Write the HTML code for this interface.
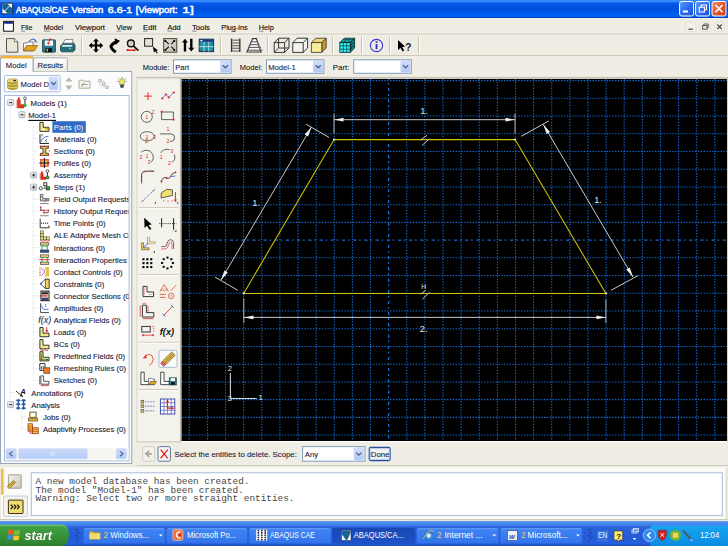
<!DOCTYPE html>
<html><head><meta charset="utf-8">
<style>
*{margin:0;padding:0;box-sizing:border-box}
html,body{width:728px;height:546px;overflow:hidden;background:#ECE9D8;font-family:"Liberation Sans",sans-serif}
.a{position:absolute;display:block}
</style></head><body>
<svg class="a" style="left:0;top:0" width="728" height="546" viewBox="0 0 728 546">
<defs>
<linearGradient id="gTitle" x1="0" y1="0" x2="0" y2="1">
 <stop offset="0" stop-color="#2F86FF"/><stop offset="0.07" stop-color="#4092FF"/><stop offset="0.16" stop-color="#0A5CEC"/>
 <stop offset="0.45" stop-color="#004FDD"/><stop offset="0.72" stop-color="#0058EA"/><stop offset="0.9" stop-color="#0066F6"/><stop offset="0.95" stop-color="#0050D8"/><stop offset="1" stop-color="#0030B0"/>
</linearGradient>
<linearGradient id="gBtnBlue" x1="0" y1="0" x2="1" y2="1">
 <stop offset="0" stop-color="#5C9BFF"/><stop offset="0.5" stop-color="#2D6DF2"/><stop offset="1" stop-color="#1A4FD6"/>
</linearGradient>
<linearGradient id="gBtnRed" x1="0" y1="0" x2="1" y2="1">
 <stop offset="0" stop-color="#F0946E"/><stop offset="0.5" stop-color="#E2582F"/><stop offset="1" stop-color="#C93E16"/>
</linearGradient>
<linearGradient id="gDrop" x1="0" y1="0" x2="0" y2="1">
 <stop offset="0" stop-color="#D4E0FC"/><stop offset="1" stop-color="#B0C8F6"/>
</linearGradient>
<linearGradient id="gTask" x1="0" y1="0" x2="0" y2="1">
 <stop offset="0" stop-color="#3A7BE8"/><stop offset="0.1" stop-color="#4A8DF0"/><stop offset="0.25" stop-color="#2A63DA"/>
 <stop offset="0.6" stop-color="#2459D8"/><stop offset="0.9" stop-color="#2460DE"/><stop offset="1" stop-color="#1A47B0"/>
</linearGradient>
<linearGradient id="gStart" x1="0" y1="0" x2="0" y2="1">
 <stop offset="0" stop-color="#5AB55A"/><stop offset="0.15" stop-color="#3F9E3F"/><stop offset="0.5" stop-color="#379437"/><stop offset="1" stop-color="#2E7E2E"/>
</linearGradient>
<linearGradient id="gTaskBtn" x1="0" y1="0" x2="0" y2="1">
 <stop offset="0" stop-color="#4E8FF5"/><stop offset="0.2" stop-color="#3C81F3"/><stop offset="1" stop-color="#3274EA"/>
</linearGradient>
<linearGradient id="gTaskAct" x1="0" y1="0" x2="0" y2="1">
 <stop offset="0" stop-color="#1A47B4"/><stop offset="1" stop-color="#1E52C8"/>
</linearGradient>
<linearGradient id="gTray" x1="0" y1="0" x2="0" y2="1">
 <stop offset="0" stop-color="#22A2F0"/><stop offset="0.2" stop-color="#12A0EE"/><stop offset="1" stop-color="#0C8BE0"/>
</linearGradient>
<linearGradient id="gScroll" x1="0" y1="0" x2="0" y2="1">
 <stop offset="0" stop-color="#CADAFB"/><stop offset="1" stop-color="#B4CCF8"/>
</linearGradient>
<linearGradient id="gTab" x1="0" y1="0" x2="0" y2="1">
 <stop offset="0" stop-color="#FDFDFC"/><stop offset="1" stop-color="#ECEAE0"/>
</linearGradient>
<linearGradient id="gExp" x1="0" y1="0" x2="1" y2="1">
 <stop offset="0" stop-color="#FFFFFF"/><stop offset="1" stop-color="#C6C2B2"/>
</linearGradient>
</defs>
<rect x="0" y="0" width="728" height="546" rx="0" fill="#EFEDE4" />
<rect x="0" y="0" width="728" height="18" rx="0" fill="url(#gTitle)" />
<rect x="0" y="18" width="728" height="16.5" rx="0" fill="#F0EEE4" />
<line x1="0" y1="34.2" x2="728" y2="34.2" stroke="#C9C5B5" stroke-width="1" />
<line x1="0" y1="35.2" x2="728" y2="35.2" stroke="#F8F7F0" stroke-width="0.8" />
<rect x="0" y="35.6" width="728" height="19.4" rx="0" fill="#EFEDE3" />
<line x1="0" y1="55.5" x2="728" y2="55.5" stroke="#CEC9B6" stroke-width="1" />
<line x1="81.5" y1="37" x2="81.5" y2="54" stroke="#C6C2AE" stroke-width="1" />
<line x1="82.5" y1="37" x2="82.5" y2="54" stroke="#FFFFFF" stroke-width="1" />
<line x1="220.5" y1="37" x2="220.5" y2="54" stroke="#C6C2AE" stroke-width="1" />
<line x1="221.5" y1="37" x2="221.5" y2="54" stroke="#FFFFFF" stroke-width="1" />
<line x1="267.5" y1="37" x2="267.5" y2="54" stroke="#C6C2AE" stroke-width="1" />
<line x1="268.5" y1="37" x2="268.5" y2="54" stroke="#FFFFFF" stroke-width="1" />
<line x1="332.5" y1="37" x2="332.5" y2="54" stroke="#C6C2AE" stroke-width="1" />
<line x1="333.5" y1="37" x2="333.5" y2="54" stroke="#FFFFFF" stroke-width="1" />
<line x1="361.5" y1="37" x2="361.5" y2="54" stroke="#C6C2AE" stroke-width="1" />
<line x1="362.5" y1="37" x2="362.5" y2="54" stroke="#FFFFFF" stroke-width="1" />
<line x1="389.5" y1="37" x2="389.5" y2="54" stroke="#C6C2AE" stroke-width="1" />
<line x1="390.5" y1="37" x2="390.5" y2="54" stroke="#FFFFFF" stroke-width="1" />
<line x1="418.5" y1="37" x2="418.5" y2="54" stroke="#C6C2AE" stroke-width="1" />
<line x1="419.5" y1="37" x2="419.5" y2="54" stroke="#FFFFFF" stroke-width="1" />
<rect x="1.9" y="3.2" width="10.6" height="10.6" rx="0" fill="#FFFFFF" stroke="#1B2F4A" stroke-width="0.9" />
<polygon points="2.4,3.7 7.6,3.7 12,8.2 12,13.3 7.4,13.3 2.4,8.4" fill="#17639B"/>
<line x1="3.6" y1="12.2" x2="10.8" y2="4.6" stroke="#E0EEF8" stroke-width="0.9" />
<text x="16.1" y="12.6" font-size="9.8" font-family="Liberation Sans" fill="#FFFFFF" textLength="51.8" lengthAdjust="spacingAndGlyphs" stroke="#FFFFFF" stroke-width="0.5">ABAQUS/CAE</text>
<text x="71.6" y="12.6" font-size="9.8" font-family="Liberation Sans" fill="#FFFFFF" textLength="31.8" lengthAdjust="spacingAndGlyphs" stroke="#FFFFFF" stroke-width="0.5">Version</text>
<text x="107.8" y="12.6" font-size="9.8" font-family="Liberation Sans" fill="#FFFFFF" textLength="24.4" lengthAdjust="spacingAndGlyphs" stroke="#FFFFFF" stroke-width="0.5">6.6-1</text>
<text x="135.8" y="12.6" font-size="9.8" font-family="Liberation Sans" fill="#FFFFFF" textLength="41.8" lengthAdjust="spacingAndGlyphs" stroke="#FFFFFF" stroke-width="0.5">[Viewport:</text>
<text x="182.3" y="12.6" font-size="9.8" font-family="Liberation Sans" fill="#FFFFFF" textLength="11.4" lengthAdjust="spacingAndGlyphs" stroke="#FFFFFF" stroke-width="0.5">1]</text>
<rect x="679.6" y="1.5" width="14" height="14.5" rx="2" fill="url(#gBtnBlue)" stroke="#FFFFFF" stroke-width="1" />
<rect x="695.6" y="1.5" width="14" height="14.5" rx="2" fill="url(#gBtnBlue)" stroke="#FFFFFF" stroke-width="1" />
<rect x="712" y="1.5" width="14" height="14.5" rx="2" fill="url(#gBtnRed)" stroke="#FFFFFF" stroke-width="1" />
<rect x="683" y="10.5" width="5" height="2" rx="0" fill="#FFFFFF" />
<rect x="699.2" y="7.2" width="5.2" height="4.8" rx="0" fill="none" stroke="#FFFFFF" stroke-width="1.1" />
<path d="M701.2,7.2 V5 H706.4 V9.8 H704.4" fill="none" stroke="#FFFFFF" stroke-width="1.1"/>
<line x1="715.5" y1="5" x2="722.5" y2="12.2" stroke="#FFFFFF" stroke-width="1.6" />
<line x1="722.5" y1="5" x2="715.5" y2="12.2" stroke="#FFFFFF" stroke-width="1.6" />
<rect x="3.6" y="21.4" width="9.8" height="9.8" rx="0" fill="#FFFFFF" stroke="#111" stroke-width="1" />
<rect x="4.2" y="22" width="8.6" height="1.8" rx="0" fill="#1C2E8C" />
<text x="21" y="29.8" font-size="7.8" font-family="Liberation Sans" fill="#101010" textLength="11.3" lengthAdjust="spacingAndGlyphs" stroke="#101010" stroke-width="0.15">File</text>
<text x="43.8" y="29.8" font-size="7.8" font-family="Liberation Sans" fill="#101010" textLength="19.3" lengthAdjust="spacingAndGlyphs" stroke="#101010" stroke-width="0.15">Model</text>
<text x="75" y="29.8" font-size="7.8" font-family="Liberation Sans" fill="#101010" textLength="30" lengthAdjust="spacingAndGlyphs" stroke="#101010" stroke-width="0.15">Viewport</text>
<text x="116.3" y="29.8" font-size="7.8" font-family="Liberation Sans" fill="#101010" textLength="15.7" lengthAdjust="spacingAndGlyphs" stroke="#101010" stroke-width="0.15">View</text>
<text x="143.1" y="29.8" font-size="7.8" font-family="Liberation Sans" fill="#101010" textLength="13.2" lengthAdjust="spacingAndGlyphs" stroke="#101010" stroke-width="0.15">Edit</text>
<text x="167.5" y="29.8" font-size="7.8" font-family="Liberation Sans" fill="#101010" textLength="13.1" lengthAdjust="spacingAndGlyphs" stroke="#101010" stroke-width="0.15">Add</text>
<text x="191.9" y="29.8" font-size="7.8" font-family="Liberation Sans" fill="#101010" textLength="18.1" lengthAdjust="spacingAndGlyphs" stroke="#101010" stroke-width="0.15">Tools</text>
<text x="221.3" y="29.8" font-size="7.8" font-family="Liberation Sans" fill="#101010" textLength="26.3" lengthAdjust="spacingAndGlyphs" stroke="#101010" stroke-width="0.15">Plug-ins</text>
<text x="258.8" y="29.8" font-size="7.8" font-family="Liberation Sans" fill="#101010" textLength="15" lengthAdjust="spacingAndGlyphs" stroke="#101010" stroke-width="0.15">Help</text>
<line x1="21" y1="31.2" x2="25" y2="31.2" stroke="#6A6A78" stroke-width="0.7" />
<line x1="44" y1="31.2" x2="50.4" y2="31.2" stroke="#6A6A78" stroke-width="0.7" />
<line x1="85.4" y1="31.2" x2="89.6" y2="31.2" stroke="#6A6A78" stroke-width="0.7" />
<line x1="116.4" y1="31.2" x2="121" y2="31.2" stroke="#6A6A78" stroke-width="0.7" />
<line x1="143.2" y1="31.2" x2="147.6" y2="31.2" stroke="#6A6A78" stroke-width="0.7" />
<line x1="167.6" y1="31.2" x2="172.4" y2="31.2" stroke="#6A6A78" stroke-width="0.7" />
<line x1="192" y1="31.2" x2="196.6" y2="31.2" stroke="#6A6A78" stroke-width="0.7" />
<line x1="231" y1="31.2" x2="235.4" y2="31.2" stroke="#6A6A78" stroke-width="0.7" />
<line x1="259" y1="31.2" x2="263.6" y2="31.2" stroke="#6A6A78" stroke-width="0.7" />
<rect x="685.6" y="22" width="10.2" height="9.6" rx="1.5" fill="#F2F0E8" stroke="#E0DDD0" stroke-width="0.8" />
<rect x="700" y="22" width="10.2" height="9.6" rx="1.5" fill="#F2F0E8" stroke="#E0DDD0" stroke-width="0.8" />
<rect x="714.2" y="22" width="10.2" height="9.6" rx="1.5" fill="#F2F0E8" stroke="#E0DDD0" stroke-width="0.8" />
<rect x="688.5" y="28.6" width="4.4" height="1.2" rx="0" fill="#444" />
<rect x="702.6" y="25.6" width="4.4" height="3.6" rx="0" fill="none" stroke="#555" stroke-width="1" />
<path d="M703.8,25.6 V24 H708.2 V27.6 H707" fill="none" stroke="#555" stroke-width="1"/>
<line x1="717.3" y1="24.5" x2="721.7" y2="29" stroke="#555" stroke-width="1.3" />
<line x1="721.7" y1="24.5" x2="717.3" y2="29" stroke="#555" stroke-width="1.3" />
<path d="M6.5,38.6 H14.6 L17.8,41.8 V52.2 H6.5 Z" fill="#EAE7D8" stroke="#55554F" stroke-width="1"/>
<path d="M14.6,38.6 V41.8 H17.8" fill="#FFFFFF" stroke="#55554F" stroke-width="0.8"/>
<path d="M23.5,43 H27 L28,42 H33 V50.8 H23.5 Z" fill="#FFFFFF" stroke="#666" stroke-width="0.8"/>
<path d="M23.5,50.8 L26.4,45.6 H37.6 L34.4,50.8 Z" fill="#E6A41E" stroke="#7A5A10" stroke-width="0.7"/>
<path d="M29,41.5 Q32.5,37.2 36,40.8" fill="none" stroke="#3A70D0" stroke-width="1.1"/>
<polygon points="35,39.6 37.4,42.2 34.4,42.2" fill="#3A70D0"/>
<rect x="42.5" y="39.8" width="13" height="12.4" rx="0.8" fill="#2A7A8C" stroke="#1C4F5C" stroke-width="0.8" />
<rect x="44.8" y="40.5" width="8.2" height="5.2" rx="0" fill="#FFFFFF" />
<rect x="45.5" y="48.2" width="6.5" height="4" rx="0" fill="#111" />
<rect x="46.6" y="48.8" width="1.4" height="2.6" rx="0" fill="#E0B020" />
<path d="M51,38.4 L48.6,41.6" stroke="#E02020" stroke-width="1.1" fill="none"/>
<polygon points="46.6,42.6 50.4,42.6 48.5,44.8" fill="#E02020"/>
<path d="M60.5,46 L63.4,43 H73.6 L75,45 V50 L72.8,51.8 H61.5 L60.5,50.5 Z" fill="#22707F" stroke="#173F48" stroke-width="0.8"/>
<path d="M63,43.2 L65,39.6 H73 L72.6,43.2 Z" fill="#FFFFFF" stroke="#5A5A5A" stroke-width="0.7"/>
<path d="M62.5,45 H72.6 L71.6,46.8 H61.8 Z" fill="#E8E8E8"/>
<rect x="69" y="48.2" width="2.2" height="0.9" rx="0" fill="#E0C040" />
<path d="M96,38.4 L99,41.6 H97.1 V44.4 H99.9 V42.5 L103.2,45.5 L99.9,48.5 V46.6 H97.1 V49.4 H99 L96,52.7 L93,49.4 H94.9 V46.6 H92.1 V48.5 L88.8,45.5 L92.1,42.5 V44.4 H94.9 V41.6 H93 Z" fill="#000"/>
<path d="M116.4,41.8 Q112,43.6 110.9,46.4 Q111.4,49 115.8,52.2" fill="none" stroke="#000" stroke-width="2.9" stroke-linejoin="round"/>
<polygon points="114.6,38.2 120,40.8 115.6,45" fill="#000"/>
<circle cx="130.9" cy="43.4" r="3.4" fill="#D4D2C8" stroke="#111" stroke-width="1.4"/>
<line x1="133.4" y1="45.9" x2="138.4" y2="50.6" stroke="#111" stroke-width="1.7" />
<line x1="127.8" y1="50.2" x2="134.4" y2="50.2" stroke="#E01818" stroke-width="1.3" />
<circle cx="127.6" cy="50.2" r="1.1" fill="#E01818"/><circle cx="134.6" cy="50.2" r="1.1" fill="#E01818"/>
<rect x="144.6" y="38.6" width="8" height="7.6" rx="0" fill="#E4E2D8" stroke="#222" stroke-width="1" />
<polygon points="152.8,46.4 158.2,50.4 156.2,50.8 157.8,53 156.8,53.4 155.4,51.2 154,52.6" fill="#000"/>
<linearGradient id="gFit" x1="0" y1="0" x2="1" y2="1"><stop offset="0" stop-color="#E4E1D6"/><stop offset="1" stop-color="#C4C0B0"/></linearGradient>
<rect x="163.7" y="38.6" width="13" height="13.6" rx="0" fill="url(#gFit)" stroke="#555248" stroke-width="1.1" />
<line x1="165.3" y1="40.9" x2="168.828" y2="44.176" stroke="#111" stroke-width="1.1" />
<circle cx="165.3" cy="40.9" r="1.05" fill="#000"/>
<line x1="174.3" y1="40.9" x2="171.34799999999998" y2="44.176" stroke="#111" stroke-width="1.1" />
<circle cx="174.3" cy="40.9" r="1.05" fill="#000"/>
<line x1="165.3" y1="50" x2="168.828" y2="46.724000000000004" stroke="#111" stroke-width="1.1" />
<circle cx="165.3" cy="50" r="1.05" fill="#000"/>
<line x1="174.3" y1="50" x2="171.34799999999998" y2="46.724000000000004" stroke="#111" stroke-width="1.1" />
<circle cx="174.3" cy="50" r="1.05" fill="#000"/>
<path d="M185,38.8 L188,42.6 H186.2 V51.6 H183.8 V42.6 H182 Z" fill="#000"/>
<path d="M191.3,51.6 L194.3,47.8 H192.5 V38.8 H190.1 V47.8 H188.3 Z" fill="#000"/>
<rect x="199.2" y="39.2" width="14.4" height="12.4" rx="0" fill="#1F8F9F" stroke="#1A2A50" stroke-width="1" />
<rect x="199.7" y="39.7" width="13.4" height="2" rx="0" fill="#24338E" />
<rect x="200.4" y="40" width="2" height="1.2" rx="0" fill="#FFFFFF" />
<line x1="204.0" y1="41.8" x2="204.0" y2="51.6" stroke="#D0E8F0" stroke-width="0.8" />
<line x1="208.79999999999998" y1="41.8" x2="208.79999999999998" y2="51.6" stroke="#D0E8F0" stroke-width="0.8" />
<line x1="199.2" y1="46.7" x2="213.6" y2="46.7" stroke="#D0E8F0" stroke-width="0.8" />
<line x1="231.6" y1="38.6" x2="231.6" y2="52" stroke="#333" stroke-width="1.4" />
<line x1="239.8" y1="38.6" x2="239.8" y2="52" stroke="#333" stroke-width="1.4" />
<line x1="232.2" y1="40.2" x2="239.2" y2="40.2" stroke="#777" stroke-width="1.3" />
<line x1="232.2" y1="42.900000000000006" x2="239.2" y2="42.900000000000006" stroke="#777" stroke-width="1.3" />
<line x1="232.2" y1="45.6" x2="239.2" y2="45.6" stroke="#777" stroke-width="1.3" />
<line x1="232.2" y1="48.300000000000004" x2="239.2" y2="48.300000000000004" stroke="#777" stroke-width="1.3" />
<line x1="232.2" y1="51.0" x2="239.2" y2="51.0" stroke="#777" stroke-width="1.3" />
<path d="M252.6,38.6 H256.4 L261,52 H247 Z" fill="#FFFFFF" stroke="#333" stroke-width="1.1"/>
<line x1="250.92835820895522" y1="41.8" x2="258.0716417910448" y2="41.8" stroke="#666" stroke-width="1.2" />
<line x1="249.46567164179103" y1="44.6" x2="259.53432835820894" y2="44.6" stroke="#666" stroke-width="1.2" />
<line x1="248.00298507462688" y1="47.4" x2="260.99701492537315" y2="47.4" stroke="#666" stroke-width="1.2" />
<line x1="246.5402985074627" y1="50.2" x2="262.4597014925373" y2="50.2" stroke="#666" stroke-width="1.2" />
<path d="M274.2,42.6 H284.6 V52.4 H274.2 Z M278.6,38.2 H289 V48 H278.6 Z M274.2,42.6 L278.6,38.2 M284.6,42.6 L289,38.2 M284.6,52.4 L289,48 M274.2,52.4 L278.6,48" fill="none" stroke="#222" stroke-width="0.9"/>
<path d="M292.8,42.6 L297.2,38.2 H307.6 V48 L303.2,52.4 H292.8 Z" fill="#F4F3EE" stroke="#222" stroke-width="0.9"/>
<path d="M292.8,42.6 H303.2 V52.4 M303.2,42.6 L307.6,38.2" fill="none" stroke="#222" stroke-width="0.9"/>
<path d="M311.4,42.6 L315.8,38.2 H326.2 L321.8,42.6 Z" fill="#F0D070" stroke="#333" stroke-width="0.8"/>
<path d="M321.8,42.6 L326.2,38.2 V48 L321.8,52.4 Z" fill="#C8962A" stroke="#333" stroke-width="0.8"/>
<path d="M311.4,42.6 H321.8 V52.4 H311.4 Z" fill="#F5EE98" stroke="#333" stroke-width="0.8"/>
<path d="M339.8,42.6 L344.2,38.2 H354.6 L350.2,42.6 Z" fill="#22E6EE" stroke="#000" stroke-width="0.7"/>
<path d="M350.2,42.6 L354.6,38.2 V48 L350.2,52.4 Z" fill="#12C4D0" stroke="#000" stroke-width="0.7"/>
<path d="M339.8,42.6 H350.2 V52.4 H339.8 Z" fill="#2AF4F8" stroke="#000" stroke-width="0.7"/>
<path d="M343.3,42.6 V52.4 M346.7,42.6 V52.4 M339.8,45.9 H350.2 M339.8,49.2 H350.2 M341.3,41.1 H351.7 M342.8,39.6 H353.2 M351.7,41.1 V50.9 M353.2,39.6 V49.5 M346.7,42.6 L351.1,38.2 M343.3,42.6 L347.7,38.2 M350.2,45.9 L354.6,41.5 M350.2,49.2 L354.6,44.8" fill="none" stroke="#000" stroke-width="0.55"/>
<circle cx="376.5" cy="45.5" r="6.1" fill="none" stroke="#3434D4" stroke-width="1.1"/>
<rect x="375.6" y="44" width="1.9" height="5.2" rx="0" fill="#3434D4" />
<rect x="375.6" y="41.2" width="1.9" height="1.7" rx="0" fill="#3434D4" />
<polygon points="398,40 398,50.2 400.4,47.8 402.6,51.4 404.2,50.6 402.2,47 405.2,46.8" fill="#000"/>
<text x="405.2" y="50.6" font-size="10" font-family="Liberation Sans" fill="#111" font-weight="bold">?</text>
<rect x="0.5" y="71.5" width="131.2" height="392" rx="0" fill="#FCFCFE" stroke="#98A6B4" stroke-width="1" />
<path d="M33,71.5 V58.5 Q33,57.8 34,57.8 H66.6 Q67.4,57.8 67.4,58.6 V71.5" fill="url(#gTab)" stroke="#A0ADBB" stroke-width="1"/>
<path d="M0.5,71.6 V57.6 Q0.5,56.2 2,56.2 H31.6 Q33,56.2 33,57.6 V71.6" fill="#FCFCFE" stroke="#98A6B4" stroke-width="1"/>
<path d="M0.8,58.4 V57.4 Q0.8,56 2.2,56 H31.4 Q32.8,56 32.8,57.4 V58.4 Z" fill="#F4B23A"/>
<rect x="1.2" y="71" width="31.4" height="1.4" rx="0" fill="#FCFCFE" />
<text x="5.8" y="67.6" font-size="7.7" font-family="Liberation Sans" fill="#1A1A40"  stroke="#1A1A40" stroke-width="0.1">Model</text>
<text x="37.4" y="67.8" font-size="7.7" font-family="Liberation Sans" fill="#1A1A40"  stroke="#1A1A40" stroke-width="0.1">Results</text>
<text x="142.8" y="70" font-size="7.8" font-family="Liberation Sans" fill="#000000" textLength="26.5" lengthAdjust="spacingAndGlyphs" >Module:</text>
<text x="239.8" y="70" font-size="7.8" font-family="Liberation Sans" fill="#000000" textLength="22.7" lengthAdjust="spacingAndGlyphs" >Model:</text>
<text x="332.8" y="70" font-size="7.8" font-family="Liberation Sans" fill="#000000" textLength="16.7" lengthAdjust="spacingAndGlyphs" >Part:</text>
<rect x="173.5" y="59.8" width="57.599999999999994" height="13.5" rx="0" fill="#FFFFFF" stroke="#7F9DB9" stroke-width="1" />
<rect x="220.7" y="60.9" width="9.4" height="11.3" rx="1" fill="url(#gDrop)" stroke="#BACBF4" stroke-width="0.6" />
<path d="M222.8,65.2 L225.4,67.8 L228.0,65.2" fill="none" stroke="#4D6185" stroke-width="1.3"/>
<text x="175.2" y="69.6" font-size="7.6" font-family="Liberation Sans" fill="#1A1A40"  stroke="#1A1A40" stroke-width="0.1">Part</text>
<rect x="266.5" y="59.8" width="57.39999999999998" height="13.5" rx="0" fill="#FFFFFF" stroke="#7F9DB9" stroke-width="1" />
<rect x="313.5" y="60.9" width="9.4" height="11.3" rx="1" fill="url(#gDrop)" stroke="#BACBF4" stroke-width="0.6" />
<path d="M315.6,65.2 L318.2,67.8 L320.8,65.2" fill="none" stroke="#4D6185" stroke-width="1.3"/>
<text x="268.2" y="69.6" font-size="7.6" font-family="Liberation Sans" fill="#1A1A40"  stroke="#1A1A40" stroke-width="0.1">Model-1</text>
<rect x="353.7" y="59.8" width="57.60000000000002" height="13.5" rx="0" fill="#FFFFFF" stroke="#7F9DB9" stroke-width="1" />
<rect x="400.90000000000003" y="60.9" width="9.4" height="11.3" rx="1" fill="url(#gDrop)" stroke="#BACBF4" stroke-width="0.6" />
<path d="M403.0,65.2 L405.6,67.8 L408.2,65.2" fill="none" stroke="#4D6185" stroke-width="1.3"/>
<rect x="4.4" y="75.6" width="55.8" height="16.2" rx="1" fill="#FFFFFF" stroke="#A9BCD6" stroke-width="1" />
<ellipse cx="12.6" cy="87.80000000000001" rx="5.4" ry="2.2" fill="#B89A30"/>
<ellipse cx="12.6" cy="86.4" rx="5.4" ry="2.1" fill="#E9D875" stroke="#8A7420" stroke-width="0.5"/>
<ellipse cx="12.6" cy="85.0" rx="5.4" ry="2.2" fill="#B89A30"/>
<ellipse cx="12.6" cy="83.6" rx="5.4" ry="2.1" fill="#E9D875" stroke="#8A7420" stroke-width="0.5"/>
<ellipse cx="12.6" cy="82.2" rx="5.4" ry="2.2" fill="#B89A30"/>
<ellipse cx="12.6" cy="80.8" rx="5.4" ry="2.1" fill="#E9D875" stroke="#8A7420" stroke-width="0.5"/>
<ellipse cx="14.6" cy="80.6" rx="1.6" ry="0.8" fill="#333"/>
<text x="20.5" y="87.2" font-size="7.7" font-family="Liberation Sans" fill="#1A1A40"  stroke="#1A1A40" stroke-width="0.1">Model D</text>
<rect x="49.2" y="77.2" width="8.8" height="12.6" rx="1" fill="url(#gDrop)" stroke="#BACBF4" stroke-width="0.6" />
<path d="M51.2,82 L53.6,84.6 L56,82" fill="none" stroke="#4D6185" stroke-width="1.3"/>
<polygon points="68.8,77.4 72.4,81.4 65.2,81.4" fill="#B8B4A2"/><polygon points="68.8,89.9 72.4,85.6 65.2,85.6" fill="#B8B4A2"/>
<path d="M79,80.2 H83 L84,81.2 H90 V88.2 H79 Z" fill="#F4F3EE" stroke="#A8A596" stroke-width="0.9"/>
<path d="M82,84.4 H87.4 M82,84.4 L83.6,83 M82,84.4 V86.8" fill="none" stroke="#888474" stroke-width="0.8"/>
<path d="M98.6,79.4 h2.4 v2.4 h-2.4 Z M102.4,82.6 h2.6 v2.6 h-2.6 Z M105.8,86 h2.4 v2.4 h-2.4 Z" fill="#F8F8F4" stroke="#A8A596" stroke-width="0.8"/>
<path d="M99.8,81.8 V85.6 H102.4 M101,80.6 H103.7 V82.6 M103.7,85.2 V87.2 H105.8" fill="none" stroke="#B8B5A6" stroke-width="0.7" stroke-dasharray="0.8 0.6"/>
<path d="M119.6,84.6 V81.4 Q119.6,78.6 122,78.6 Q124.4,78.6 124.4,81.4 V84.6 Z" fill="#F2E468" stroke="#8A8A50" stroke-width="0.6"/>
<rect x="120.2" y="84.6" width="3.6" height="3.2" rx="0.8" fill="#3E4A44" />
<line x1="117.2" y1="81.4" x2="118.8" y2="81.4" stroke="#5A8A5A" stroke-width="0.8" />
<line x1="125.2" y1="81.4" x2="126.8" y2="81.4" stroke="#5A8A5A" stroke-width="0.8" />
<line x1="117.8" y1="78.2" x2="119" y2="79.4" stroke="#5A8A5A" stroke-width="0.8" />
<line x1="126.2" y1="78.2" x2="125" y2="79.4" stroke="#5A8A5A" stroke-width="0.8" />
<line x1="122" y1="76.6" x2="122" y2="77.8" stroke="#5A8A5A" stroke-width="0.8" />
<rect x="4.5" y="95.5" width="124.6" height="365.4" rx="0" fill="#FFFFFF" stroke="#A7BCDB" stroke-width="1" />
<line x1="10.4" y1="107" x2="10.4" y2="401.6" stroke="#D6D6D6" stroke-width="0.8" stroke-dasharray="1 1"/>
<line x1="33.2" y1="121" x2="33.2" y2="380.43999999999994" stroke="#D6D6D6" stroke-width="0.8" stroke-dasharray="1 1"/>
<line x1="21.6" y1="408.6" x2="21.6" y2="428.76" stroke="#D6D6D6" stroke-width="0.8" stroke-dasharray="1 1"/>
<line x1="21.6" y1="108" x2="21.6" y2="111" stroke="#D6D6D6" stroke-width="0.8" stroke-dasharray="1 1"/>
<line x1="33.2" y1="126.75999999999999" x2="38.6" y2="126.75999999999999" stroke="#D6D6D6" stroke-width="0.8" stroke-dasharray="1 1"/>
<line x1="33.2" y1="138.84" x2="38.6" y2="138.84" stroke="#D6D6D6" stroke-width="0.8" stroke-dasharray="1 1"/>
<line x1="33.2" y1="150.92" x2="38.6" y2="150.92" stroke="#D6D6D6" stroke-width="0.8" stroke-dasharray="1 1"/>
<line x1="33.2" y1="163.0" x2="38.6" y2="163.0" stroke="#D6D6D6" stroke-width="0.8" stroke-dasharray="1 1"/>
<line x1="33.2" y1="199.24" x2="38.6" y2="199.24" stroke="#D6D6D6" stroke-width="0.8" stroke-dasharray="1 1"/>
<line x1="33.2" y1="211.32" x2="38.6" y2="211.32" stroke="#D6D6D6" stroke-width="0.8" stroke-dasharray="1 1"/>
<line x1="33.2" y1="223.39999999999998" x2="38.6" y2="223.39999999999998" stroke="#D6D6D6" stroke-width="0.8" stroke-dasharray="1 1"/>
<line x1="33.2" y1="235.48" x2="38.6" y2="235.48" stroke="#D6D6D6" stroke-width="0.8" stroke-dasharray="1 1"/>
<line x1="33.2" y1="247.56" x2="38.6" y2="247.56" stroke="#D6D6D6" stroke-width="0.8" stroke-dasharray="1 1"/>
<line x1="33.2" y1="259.64" x2="38.6" y2="259.64" stroke="#D6D6D6" stroke-width="0.8" stroke-dasharray="1 1"/>
<line x1="33.2" y1="271.72" x2="38.6" y2="271.72" stroke="#D6D6D6" stroke-width="0.8" stroke-dasharray="1 1"/>
<line x1="33.2" y1="283.79999999999995" x2="38.6" y2="283.79999999999995" stroke="#D6D6D6" stroke-width="0.8" stroke-dasharray="1 1"/>
<line x1="33.2" y1="295.88" x2="38.6" y2="295.88" stroke="#D6D6D6" stroke-width="0.8" stroke-dasharray="1 1"/>
<line x1="33.2" y1="307.96000000000004" x2="38.6" y2="307.96000000000004" stroke="#D6D6D6" stroke-width="0.8" stroke-dasharray="1 1"/>
<line x1="33.2" y1="320.03999999999996" x2="38.6" y2="320.03999999999996" stroke="#D6D6D6" stroke-width="0.8" stroke-dasharray="1 1"/>
<line x1="33.2" y1="332.12" x2="38.6" y2="332.12" stroke="#D6D6D6" stroke-width="0.8" stroke-dasharray="1 1"/>
<line x1="33.2" y1="344.2" x2="38.6" y2="344.2" stroke="#D6D6D6" stroke-width="0.8" stroke-dasharray="1 1"/>
<line x1="33.2" y1="356.28" x2="38.6" y2="356.28" stroke="#D6D6D6" stroke-width="0.8" stroke-dasharray="1 1"/>
<line x1="33.2" y1="368.36" x2="38.6" y2="368.36" stroke="#D6D6D6" stroke-width="0.8" stroke-dasharray="1 1"/>
<line x1="33.2" y1="380.43999999999994" x2="38.6" y2="380.43999999999994" stroke="#D6D6D6" stroke-width="0.8" stroke-dasharray="1 1"/>
<line x1="10.4" y1="392.52" x2="15" y2="392.52" stroke="#D6D6D6" stroke-width="0.8" stroke-dasharray="1 1"/>
<line x1="21.6" y1="416.67999999999995" x2="27" y2="416.67999999999995" stroke="#D6D6D6" stroke-width="0.8" stroke-dasharray="1 1"/>
<line x1="21.6" y1="428.76" x2="27" y2="428.76" stroke="#D6D6D6" stroke-width="0.8" stroke-dasharray="1 1"/>
<rect x="7.6" y="99.6" width="6" height="6" rx="0.8" fill="url(#gExp)" stroke="#9AB0CC" stroke-width="0.8" />
<line x1="9.1" y1="102.6" x2="12.1" y2="102.6" stroke="#222" stroke-width="0.9" />
<path d="M17.2,108.0 V100.39999999999999 L18.8,97.0 L20.4,100.39999999999999 V104.39999999999999 H24 V108.0 Z" fill="#E23A22" stroke="#A02010" stroke-width="0.4"/>
<line x1="16.2" y1="100.19999999999999" x2="16.2" y2="107.8" stroke="#E87070" stroke-width="0.9" stroke-dasharray="0.7 0.7"/>
<circle cx="25" cy="98.19999999999999" r="1.4" fill="#fff" stroke="#333" stroke-width="0.7"/>
<line x1="25" y1="99.6" x2="25" y2="105.19999999999999" stroke="#111" stroke-width="0.9" />
<circle cx="25.1" cy="105.6" r="1.5" fill="#20B030"/>
<text x="30.6" y="105.6" font-size="7.7" font-family="Liberation Sans" fill="#161636"  stroke="#161636" stroke-width="0.1">Models (1)</text>
<rect x="18.9" y="111.67999999999999" width="6" height="6" rx="0.8" fill="url(#gExp)" stroke="#9AB0CC" stroke-width="0.8" />
<line x1="20.4" y1="114.67999999999999" x2="23.4" y2="114.67999999999999" stroke="#222" stroke-width="0.9" />
<text x="28.2" y="117.67999999999999" font-size="7.7" font-family="Liberation Sans" fill="#161636"  stroke="#161636" stroke-width="0.1">Model-1</text>
<line x1="28.2" y1="120.4" x2="56" y2="120.4" stroke="#000" stroke-width="1.1" />
<rect x="52.4" y="121.2" width="33.4" height="11.6" rx="0" fill="#316AC5" />
<clipPath id="treeclip"><rect x="5" y="96" width="123.6" height="350"/></clipPath>
<g clip-path="url(#treeclip)">
<text x="53.8" y="129.76" font-size="7.7" font-family="Liberation Sans" fill="#FFFFFF" >Parts (0)</text>
<text x="53.8" y="141.84" font-size="7.7" font-family="Liberation Sans" fill="#161636"  stroke="#161636" stroke-width="0.1">Materials (0)</text>
<text x="53.8" y="153.92" font-size="7.7" font-family="Liberation Sans" fill="#161636"  stroke="#161636" stroke-width="0.1">Sections (0)</text>
<text x="53.8" y="166.0" font-size="7.7" font-family="Liberation Sans" fill="#161636"  stroke="#161636" stroke-width="0.1">Profiles (0)</text>
<text x="53.8" y="178.07999999999998" font-size="7.7" font-family="Liberation Sans" fill="#161636"  stroke="#161636" stroke-width="0.1">Assembly</text>
<text x="53.8" y="190.16" font-size="7.7" font-family="Liberation Sans" fill="#161636"  stroke="#161636" stroke-width="0.1">Steps (1)</text>
<text x="53.8" y="202.24" font-size="7.7" font-family="Liberation Sans" fill="#161636"  stroke="#161636" stroke-width="0.1">Field Output Requests</text>
<text x="53.8" y="214.32" font-size="7.7" font-family="Liberation Sans" fill="#161636"  stroke="#161636" stroke-width="0.1">History Output Requests</text>
<text x="53.8" y="226.39999999999998" font-size="7.7" font-family="Liberation Sans" fill="#161636"  stroke="#161636" stroke-width="0.1">Time Points (0)</text>
<text x="53.8" y="238.48" font-size="7.7" font-family="Liberation Sans" fill="#161636"  stroke="#161636" stroke-width="0.1">ALE Adaptive Mesh Constraints</text>
<text x="53.8" y="250.56" font-size="7.7" font-family="Liberation Sans" fill="#161636"  stroke="#161636" stroke-width="0.1">Interactions (0)</text>
<text x="53.8" y="262.64" font-size="7.7" font-family="Liberation Sans" fill="#161636"  stroke="#161636" stroke-width="0.1">Interaction Properties</text>
<text x="53.8" y="274.72" font-size="7.7" font-family="Liberation Sans" fill="#161636"  stroke="#161636" stroke-width="0.1">Contact Controls (0)</text>
<text x="53.8" y="286.79999999999995" font-size="7.7" font-family="Liberation Sans" fill="#161636"  stroke="#161636" stroke-width="0.1">Constraints (0)</text>
<text x="53.8" y="298.88" font-size="7.7" font-family="Liberation Sans" fill="#161636"  stroke="#161636" stroke-width="0.1">Connector Sections (0)</text>
<text x="53.8" y="310.96000000000004" font-size="7.7" font-family="Liberation Sans" fill="#161636"  stroke="#161636" stroke-width="0.1">Amplitudes (0)</text>
<text x="53.8" y="323.03999999999996" font-size="7.7" font-family="Liberation Sans" fill="#161636"  stroke="#161636" stroke-width="0.1">Analytical Fields (0)</text>
<text x="53.8" y="335.12" font-size="7.7" font-family="Liberation Sans" fill="#161636"  stroke="#161636" stroke-width="0.1">Loads (0)</text>
<text x="53.8" y="347.2" font-size="7.7" font-family="Liberation Sans" fill="#161636"  stroke="#161636" stroke-width="0.1">BCs (0)</text>
<text x="53.8" y="359.28" font-size="7.7" font-family="Liberation Sans" fill="#161636"  stroke="#161636" stroke-width="0.1">Predefined Fields (0)</text>
<text x="53.8" y="371.36" font-size="7.7" font-family="Liberation Sans" fill="#161636"  stroke="#161636" stroke-width="0.1">Remeshing Rules (0)</text>
<text x="53.8" y="383.43999999999994" font-size="7.7" font-family="Liberation Sans" fill="#161636"  stroke="#161636" stroke-width="0.1">Sketches (0)</text>
<text x="31.3" y="395.52" font-size="7.7" font-family="Liberation Sans" fill="#161636"  stroke="#161636" stroke-width="0.1">Annotations (0)</text>
<text x="31.3" y="407.6" font-size="7.7" font-family="Liberation Sans" fill="#161636"  stroke="#161636" stroke-width="0.1">Analysis</text>
<text x="42.9" y="419.67999999999995" font-size="7.7" font-family="Liberation Sans" fill="#161636"  stroke="#161636" stroke-width="0.1">Jobs (0)</text>
<text x="42.9" y="431.76" font-size="7.7" font-family="Liberation Sans" fill="#161636"  stroke="#161636" stroke-width="0.1">Adaptivity Processes (0)</text>
</g>
<rect x="30.6" y="172.07999999999998" width="6" height="6" rx="0.8" fill="url(#gExp)" stroke="#9AB0CC" stroke-width="0.8" />
<line x1="32.1" y1="175.07999999999998" x2="35.1" y2="175.07999999999998" stroke="#222" stroke-width="0.9" />
<line x1="33.6" y1="173.57999999999998" x2="33.6" y2="176.57999999999998" stroke="#222" stroke-width="0.9" />
<rect x="30.6" y="184.16" width="6" height="6" rx="0.8" fill="url(#gExp)" stroke="#9AB0CC" stroke-width="0.8" />
<line x1="32.1" y1="187.16" x2="35.1" y2="187.16" stroke="#222" stroke-width="0.9" />
<line x1="33.6" y1="185.66" x2="33.6" y2="188.66" stroke="#222" stroke-width="0.9" />
<rect x="7.6" y="401.6" width="6" height="6" rx="0.8" fill="url(#gExp)" stroke="#9AB0CC" stroke-width="0.8" />
<line x1="9.1" y1="404.6" x2="12.1" y2="404.6" stroke="#222" stroke-width="0.9" />
<path d="M39.9,122.35999999999999 H43.199999999999996 V127.35999999999999 H48.8 V131.35999999999999 H39.9 Z" fill="#F4EC98" stroke="#3A3420" stroke-width="1"/>
<path d="M43.199999999999996,127.35999999999999 H48.8 L49.2,129.35999999999999 L48.8,131.35999999999999" fill="#D8A838" stroke="#3A3420" stroke-width="0.6"/>
<path d="M40.0,134.24 V143.44 H49.0" fill="none" stroke="#222" stroke-width="1"/>
<path d="M40.4,142.64000000000001 Q42.4,136.44 48.599999999999994,136.24" fill="none" stroke="#4060D0" stroke-width="0.9"/>
<path d="M47.0,139.24 L45.4,140.64000000000001 L47.0,141.84" fill="none" stroke="#222" stroke-width="0.7"/>
<path d="M41.4,134.44 H42.8 M41.4,135.84 H42.8" stroke="#222" stroke-width="0.6"/>
<path d="M40.4,146.32 H48.4 V148.32 H45.8 V153.32 H48.4 V155.32 H40.4 V153.32 H43.0 V148.32 H40.4 Z" fill="#F0C848" stroke="#222" stroke-width="0.8"/>
<circle cx="40.4" cy="146.32" r="0.7" fill="#E02020"/>
<circle cx="48.4" cy="146.32" r="0.7" fill="#E02020"/>
<circle cx="40.4" cy="155.32" r="0.7" fill="#E02020"/>
<circle cx="48.4" cy="155.32" r="0.7" fill="#E02020"/>
<circle cx="44.4" cy="146.11999999999998" r="0.7" fill="#E02020"/>
<circle cx="49.4" cy="150.92" r="0.7" fill="#E02020"/>
<rect x="40.6" y="159.4" width="7.8" height="7.2" rx="0" fill="#F08040" stroke="#E04040" stroke-width="0.7" />
<rect x="42.0" y="160.8" width="5" height="4.4" rx="0" fill="#F4C060" />
<line x1="44.4" y1="158.0" x2="44.4" y2="168.0" stroke="#111" stroke-width="1" />
<line x1="39.4" y1="163.0" x2="49.599999999999994" y2="163.0" stroke="#111" stroke-width="1" />
<path d="M40.4,179.67999999999998 V174.07999999999998 L42.0,170.27999999999997 L43.4,174.07999999999998 V176.67999999999998 H46.0 V179.67999999999998 Z" fill="#E02818"/>
<line x1="39.699999999999996" y1="173.07999999999998" x2="39.699999999999996" y2="179.67999999999998" stroke="#E06060" stroke-width="0.6" stroke-dasharray="0.8 0.8"/>
<circle cx="47.4" cy="171.07999999999998" r="1.4" fill="#fff" stroke="#222" stroke-width="0.7"/>
<line x1="47.4" y1="172.48" x2="47.4" y2="176.67999999999998" stroke="#111" stroke-width="0.9" />
<circle cx="47.599999999999994" cy="177.48" r="1.6" fill="#20B030" stroke="#111" stroke-width="0.4"/>
<circle cx="40.8" cy="188.35999999999999" r="1.6" fill="#fff" stroke="#111" stroke-width="0.7"/>
<line x1="42.4" y1="188.35999999999999" x2="46.4" y2="188.35999999999999" stroke="#666" stroke-width="0.8" />
<rect x="43.8" y="182.76" width="3" height="3" rx="0" fill="#fff" stroke="#111" stroke-width="0.8" />
<line x1="44.8" y1="185.76" x2="44.8" y2="188.35999999999999" stroke="#666" stroke-width="0.8" />
<rect x="46.199999999999996" y="186.76" width="3.2" height="3.2" rx="0" fill="#20B030" stroke="#111" stroke-width="0.6" />
<path d="M40.4,194.44 V200.84 H48.8 V198.64000000000001 H42.8 V194.44 Z" fill="#fff" stroke="#222" stroke-width="0.7"/>
<line x1="41.199999999999996" y1="196.04000000000002" x2="42.199999999999996" y2="197.64000000000001" stroke="#E02020" stroke-width="0.9" />
<line x1="41.4" y1="199.84" x2="43.4" y2="199.84" stroke="#20A030" stroke-width="0.9" />
<line x1="44.4" y1="199.84" x2="48.0" y2="199.84" stroke="#4050D0" stroke-width="0.9" />
<line x1="44.9" y1="200.84" x2="44.9" y2="202.24" stroke="#E02020" stroke-width="0.9" />
<line x1="40.4" y1="203.64000000000001" x2="48.8" y2="203.64000000000001" stroke="#333" stroke-width="1" stroke-dasharray="1.2 0.8"/>
<path d="M40.8,207.12 V210.32 H44.0 V212.72 H48.2 V210.12" fill="none" stroke="#222" stroke-width="0.7"/>
<circle cx="40.8" cy="207.12" r="0.8" fill="#E02020"/>
<circle cx="40.8" cy="210.32" r="0.8" fill="#E02020"/>
<circle cx="44.0" cy="210.32" r="0.8" fill="#E02020"/>
<circle cx="44.0" cy="212.92" r="0.8" fill="#E02020"/>
<circle cx="48.2" cy="210.12" r="0.8" fill="#E02020"/>
<circle cx="46.199999999999996" cy="210.32" r="0.8" fill="#E02020"/>
<line x1="40.4" y1="215.72" x2="48.8" y2="215.72" stroke="#333" stroke-width="1" stroke-dasharray="1.2 0.8"/>
<path d="M40.199999999999996,218.79999999999998 V227.79999999999998 H49.0 V225.39999999999998" fill="none" stroke="#222" stroke-width="0.9"/>
<path d="M41.0,223.2 H48.2" stroke="#5060D8" stroke-width="1.6" stroke-dasharray="1.2 0.8"/>
<rect x="40.4" y="230.88" width="3" height="3" rx="0" fill="#F0E070" stroke="#333" stroke-width="0.5" />
<rect x="40.4" y="233.88" width="3" height="3" rx="0" fill="#F0E070" stroke="#333" stroke-width="0.5" />
<rect x="40.4" y="236.88" width="3" height="3" rx="0" fill="#F0E070" stroke="#333" stroke-width="0.5" />
<rect x="43.4" y="236.88" width="3" height="3" rx="0" fill="#F0E070" stroke="#333" stroke-width="0.5" />
<rect x="46.4" y="236.88" width="3" height="3" rx="0" fill="#F0E070" stroke="#333" stroke-width="0.5" />
<path d="M40.0,240.88 q1,-1 2,0 t2,0 t2,0 t2,0 t2,0" fill="none" stroke="#E02020" stroke-width="0.7"/>
<rect x="40.4" y="242.76" width="8.4" height="2.4" rx="0" fill="#E0CC70" stroke="#333" stroke-width="0.6" />
<rect x="40.4" y="249.96" width="8.4" height="2.4" rx="0" fill="#3050A0" stroke="#333" stroke-width="0.6" />
<line x1="42.0" y1="245.16" x2="42.0" y2="249.96" stroke="#20A040" stroke-width="1" />
<line x1="47.199999999999996" y1="245.16" x2="47.199999999999996" y2="249.96" stroke="#20A040" stroke-width="1" />
<line x1="42.0" y1="246.56" x2="47.199999999999996" y2="246.56" stroke="#20A040" stroke-width="0.5" />
<rect x="40.4" y="254.83999999999997" width="8.4" height="2.4" rx="0" fill="#E0CC70" stroke="#333" stroke-width="0.6" />
<rect x="40.4" y="262.03999999999996" width="8.4" height="2.4" rx="0" fill="#E0CC70" stroke="#333" stroke-width="0.6" />
<line x1="42.0" y1="257.24" x2="42.0" y2="262.03999999999996" stroke="#20A040" stroke-width="1" />
<line x1="47.199999999999996" y1="257.24" x2="47.199999999999996" y2="262.03999999999996" stroke="#20A040" stroke-width="1" />
<line x1="39.4" y1="259.64" x2="49.8" y2="259.64" stroke="#E03030" stroke-width="1" />
<path d="M44.4,266.92 H49.0 V276.52000000000004 H44.4 Q47.4,271.72 44.4,266.92 Z" fill="#F0C040"/>
<path d="M41.4,268.12 L44.4,270.72 V272.72 L41.4,275.32000000000005" fill="none" stroke="#4050D0" stroke-width="0.8"/>
<line x1="40.0" y1="267.32000000000005" x2="40.0" y2="276.12" stroke="#E02020" stroke-width="1" stroke-dasharray="0.8 0.8"/>
<path d="M40.4,283.79999999999995 L45.4,279.19999999999993 H49.0 V288.4 H45.4 Z" fill="#fff" stroke="#222" stroke-width="0.8"/>
<rect x="45.4" y="279.19999999999993" width="3.6" height="9.2" rx="0" fill="#F0D060" stroke="#222" stroke-width="0.6" />
<circle cx="41.0" cy="283.79999999999995" r="1" fill="#5060C0"/>
<rect x="41.0" y="291.08" width="8" height="9.6" rx="0" fill="#E8E8E8" stroke="#111" stroke-width="1" />
<rect x="42.0" y="292.28" width="6" height="2" rx="0" fill="#222" />
<rect x="42.0" y="297.68" width="6" height="2.2" rx="0" fill="#334070" />
<line x1="42.0" y1="295.88" x2="47.4" y2="295.88" stroke="#E02020" stroke-width="1.2" />
<path d="M47.8,294.68 L49.4,295.88 L47.8,297.08" fill="none" stroke="#C0A020" stroke-width="0.8"/>
<line x1="39.8" y1="295.88" x2="41.0" y2="295.88" stroke="#333" stroke-width="1" />
<path d="M40.6,303.16 V312.56000000000006 H49.0" fill="none" stroke="#222" stroke-width="0.8"/>
<path d="M40.8,304.96000000000004 L43.6,309.36 H48.599999999999994" fill="none" stroke="#3050D0" stroke-width="0.8"/>
<text x="44.4" y="306.96000000000004" font-size="4" font-family="Liberation Sans" fill="#222" >1</text>
<text x="38.199999999999996" y="323.43999999999994" font-size="9" font-family="Liberation Sans" fill="#111" font-style="italic">f(x)</text>
<path d="M39.9,327.52 H43.0 V333.12 H49.0 V336.72 H39.9 Z" fill="#F2EA90" stroke="#222" stroke-width="0.9"/>
<line x1="46.8" y1="327.12" x2="46.8" y2="330.92" stroke="#E02020" stroke-width="0.9" />
<polygon points="45.199999999999996,330.32 48.4,330.32 46.8,332.52" fill="#E02020"/>
<path d="M39.9,339.59999999999997 H43.0 V345.2 H49.0 V348.8 H39.9 Z" fill="#F2EA90" stroke="#222" stroke-width="0.9"/>
<path d="M40.0,350.2 q1,-1.4 2,0 t2,0 t2,0 t2,0" fill="none" stroke="#E02020" stroke-width="0.7"/>
<path d="M39.9,351.67999999999995 H43.0 V357.28 H49.0 V360.88 H39.9 Z" fill="#E8E070" stroke="#222" stroke-width="0.9"/>
<path d="M40.8,353.28 L42.0,359.88 L48.0,359.67999999999995" fill="none" stroke="#20A040" stroke-width="1"/>
<circle cx="41.4" cy="359.28" r="1" fill="#E03020"/><circle cx="47.0" cy="359.47999999999996" r="0.8" fill="#3050C0"/>
<path d="M39.8,363.56 H45.0 V370.36 H39.8 Z" fill="#fff" stroke="#222" stroke-width="0.9"/>
<line x1="41.4" y1="366.36" x2="41.4" y2="369.36" stroke="#222" stroke-width="0.8" />
<line x1="43.199999999999996" y1="365.76" x2="43.199999999999996" y2="369.36" stroke="#222" stroke-width="0.8" />
<rect x="43.8" y="367.76" width="6" height="5.6" rx="0" fill="#E86A20" stroke="#444" stroke-width="0.6" />
<line x1="43.8" y1="369.56" x2="49.8" y2="369.56" stroke="#F0A040" stroke-width="0.5" />
<line x1="43.8" y1="371.36" x2="49.8" y2="371.36" stroke="#F0A040" stroke-width="0.5" />
<path d="M40.8,375.8399999999999 H43.6 V381.23999999999995 H49.0 V384.23999999999995 H40.8 Z" fill="#F4F4F4" stroke="#333" stroke-width="0.8"/>
<line x1="39.6" y1="375.8399999999999" x2="39.6" y2="384.23999999999995" stroke="#E02020" stroke-width="0.8" />
<line x1="40.8" y1="385.63999999999993" x2="49.0" y2="385.63999999999993" stroke="#E02020" stroke-width="0.8" />
<line x1="15.9" y1="390.91999999999996" x2="22.2" y2="396.32" stroke="#111" stroke-width="0.9" />
<polygon points="23.2,397.12 19.8,395.91999999999996 21.6,394.12" fill="#111"/>
<text x="20.6" y="393.52" font-size="7.2" font-family="Liberation Sans" fill="#111" font-weight="bold" font-style="italic">A</text>
<line x1="18.3" y1="399.6" x2="18.3" y2="409.6" stroke="#1C4E8E" stroke-width="1.1" />
<ellipse cx="18.3" cy="400.40000000000003" rx="2.1" ry="0.9" fill="#2A6CB8" stroke="#163E70" stroke-width="0.35"/>
<ellipse cx="18.3" cy="404.20000000000005" rx="2.1" ry="0.9" fill="#2A6CB8" stroke="#163E70" stroke-width="0.35"/>
<ellipse cx="18.3" cy="408.20000000000005" rx="2.1" ry="0.9" fill="#2A6CB8" stroke="#163E70" stroke-width="0.35"/>
<line x1="23.6" y1="399.6" x2="23.6" y2="409.6" stroke="#1C4E8E" stroke-width="1.1" />
<ellipse cx="23.6" cy="400.40000000000003" rx="2.1" ry="0.9" fill="#2A6CB8" stroke="#163E70" stroke-width="0.35"/>
<ellipse cx="23.6" cy="404.20000000000005" rx="2.1" ry="0.9" fill="#2A6CB8" stroke="#163E70" stroke-width="0.35"/>
<ellipse cx="23.6" cy="408.20000000000005" rx="2.1" ry="0.9" fill="#2A6CB8" stroke="#163E70" stroke-width="0.35"/>
<rect x="29.8" y="412.0799999999999" width="6.4" height="5.4" rx="0" fill="#F0D060" stroke="#555" stroke-width="0.8" />
<rect x="30.8" y="413.0799999999999" width="4.4" height="3.4" rx="0" fill="#FFFFFF" />
<rect x="28.2" y="418.0799999999999" width="9.6" height="3" rx="0" fill="#E0A820" stroke="#555" stroke-width="0.6" />
<rect x="28" y="423.76" width="4.4" height="7.4" rx="0" fill="#E8C840" stroke="#8A2A10" stroke-width="0.7" />
<rect x="32.6" y="427.76" width="5.6" height="6" rx="0" fill="#E8C840" stroke="#8A2A10" stroke-width="0.7" />
<line x1="28" y1="425.96" x2="32.4" y2="425.96" stroke="#C83010" stroke-width="0.6" />
<line x1="28" y1="427.96" x2="32.4" y2="427.96" stroke="#C83010" stroke-width="0.6" />
<line x1="28" y1="429.96" x2="32.4" y2="429.96" stroke="#C83010" stroke-width="0.6" />
<line x1="32.6" y1="429.56" x2="38.2" y2="429.56" stroke="#C83010" stroke-width="0.6" />
<line x1="32.6" y1="431.56" x2="38.2" y2="431.56" stroke="#C83010" stroke-width="0.6" />
<path d="M30,431.36 V433.15999999999997 H32.6" fill="none" stroke="#E02020" stroke-width="0.9"/>
<rect x="5" y="448.4" width="123.6" height="11" rx="0" fill="#F6F5F0" />
<rect x="6.2" y="448.8" width="10" height="10" rx="1.2" fill="url(#gScroll)" stroke="#C0D2F4" stroke-width="0.6" />
<path d="M12.6,451.4 L9.6,453.8 L12.6,456.2" fill="none" stroke="#4D6185" stroke-width="1.2"/>
<rect x="18.8" y="448.8" width="68.4" height="10" rx="1.2" fill="url(#gScroll)" stroke="#C0D2F4" stroke-width="0.6" />
<line x1="50.8" y1="451.8" x2="50.8" y2="455.8" stroke="#E8F0FF" stroke-width="0.8" />
<line x1="52.4" y1="451.8" x2="52.4" y2="455.8" stroke="#E8F0FF" stroke-width="0.8" />
<line x1="54.0" y1="451.8" x2="54.0" y2="455.8" stroke="#E8F0FF" stroke-width="0.8" />
<rect x="116.3" y="448.8" width="10" height="10" rx="1.2" fill="url(#gScroll)" stroke="#C0D2F4" stroke-width="0.6" />
<path d="M120,451.4 L123,453.8 L120,456.2" fill="none" stroke="#4D6185" stroke-width="1.2"/>
<rect x="136.4" y="77.2" width="44" height="364.6" rx="0" fill="#F3F2EB" />
<line x1="136.4" y1="77.4" x2="728" y2="77.4" stroke="#C3BFAE" stroke-width="1" />
<line x1="137" y1="78.6" x2="180" y2="78.6" stroke="#E2E0D6" stroke-width="1.2" />
<line x1="136.9" y1="78" x2="136.9" y2="442" stroke="#DAD7C8" stroke-width="1" />
<line x1="138.4" y1="207.7" x2="178.4" y2="207.7" stroke="#CDC9B6" stroke-width="1" />
<line x1="138.4" y1="208.7" x2="178.4" y2="208.7" stroke="#FFFFFF" stroke-width="1" />
<line x1="138.4" y1="274.4" x2="178.4" y2="274.4" stroke="#CDC9B6" stroke-width="1" />
<line x1="138.4" y1="275.4" x2="178.4" y2="275.4" stroke="#FFFFFF" stroke-width="1" />
<line x1="138.4" y1="342.3" x2="178.4" y2="342.3" stroke="#CDC9B6" stroke-width="1" />
<line x1="138.4" y1="343.3" x2="178.4" y2="343.3" stroke="#FFFFFF" stroke-width="1" />
<line x1="138.4" y1="389.5" x2="178.4" y2="389.5" stroke="#CDC9B6" stroke-width="1" />
<line x1="138.4" y1="390.5" x2="178.4" y2="390.5" stroke="#FFFFFF" stroke-width="1" />
<line x1="136.4" y1="441.9" x2="181" y2="441.9" stroke="#C8C4B0" stroke-width="1" />
<line x1="180.5" y1="78" x2="180.5" y2="442" stroke="#B8B4A2" stroke-width="1" />
<line x1="181.5" y1="78.5" x2="181.5" y2="442" stroke="#85827A" stroke-width="1" />
<line x1="181" y1="78.5" x2="728" y2="78.5" stroke="#CFCCBF" stroke-width="1" />
<line x1="181" y1="441.7" x2="728" y2="441.7" stroke="#FFFFFF" stroke-width="1.2" />
<line x1="727.5" y1="79" x2="727.5" y2="442" stroke="#D8D4C4" stroke-width="1" />
<line x1="144.2" y1="96.1" x2="151.9" y2="96.1" stroke="#E03030" stroke-width="1" />
<line x1="148.1" y1="92.2" x2="148.1" y2="100" stroke="#E03030" stroke-width="1" />
<path d="M162.2,98.5 L165.9,94.4 L168.8,97.4 L173.9,92.5" fill="none" stroke="#5060D8" stroke-width="0.8"/>
<line x1="161.0" y1="98.5" x2="163.39999999999998" y2="98.5" stroke="#E03030" stroke-width="0.9" />
<line x1="162.2" y1="97.3" x2="162.2" y2="99.7" stroke="#E03030" stroke-width="0.9" />
<line x1="164.70000000000002" y1="94.4" x2="167.1" y2="94.4" stroke="#E03030" stroke-width="0.9" />
<line x1="165.9" y1="93.2" x2="165.9" y2="95.60000000000001" stroke="#E03030" stroke-width="0.9" />
<line x1="167.60000000000002" y1="97.4" x2="170.0" y2="97.4" stroke="#E03030" stroke-width="0.9" />
<line x1="168.8" y1="96.2" x2="168.8" y2="98.60000000000001" stroke="#E03030" stroke-width="0.9" />
<line x1="172.70000000000002" y1="92.5" x2="175.1" y2="92.5" stroke="#E03030" stroke-width="0.9" />
<line x1="173.9" y1="91.3" x2="173.9" y2="93.7" stroke="#E03030" stroke-width="0.9" />
<circle cx="146.8" cy="116.8" r="5.5" fill="none" stroke="#3A4440" stroke-width="0.8"/>
<text x="145.3" y="119.4" font-size="5.4" font-family="Liberation Sans" fill="#E03030" >1</text>
<text x="151.6" y="113.8" font-size="5.4" font-family="Liberation Sans" fill="#E03030" >2</text>
<path d="M161.6,112 H173.4 V119.6 H161.6 Z" fill="none" stroke="#4A5250" stroke-width="0.9"/>
<line x1="160.2" y1="111.8" x2="163" y2="111.8" stroke="#E03030" stroke-width="0.8" />
<line x1="161.6" y1="110.4" x2="161.6" y2="113.2" stroke="#E03030" stroke-width="0.8" />
<line x1="172.2" y1="119.6" x2="175" y2="119.6" stroke="#E03030" stroke-width="0.8" />
<line x1="173.6" y1="118.2" x2="173.6" y2="121" stroke="#E03030" stroke-width="0.8" />
<ellipse cx="147.2" cy="136.3" rx="7" ry="4.6" fill="none" stroke="#3A4440" stroke-width="0.8"/>
<text x="145.6" y="138.6" font-size="5.4" font-family="Liberation Sans" fill="#E03030" >1</text>
<text x="153.2" y="139" font-size="5.4" font-family="Liberation Sans" fill="#E03030" >2</text>
<text x="145" y="143.4" font-size="5.2" font-family="Liberation Sans" fill="#E03030" >2</text>
<path d="M160,133.9 H171.4 A3.8,3.8 0 0 1 171.4,141.4 H170" fill="none" stroke="#4A5250" stroke-width="0.9"/>
<text x="166.4" y="130.8" font-size="5.4" font-family="Liberation Sans" fill="#E03030" >1</text>
<text x="166.4" y="143.4" font-size="5.4" font-family="Liberation Sans" fill="#E03030" >2</text>
<path d="M141.4,152.2 A6.4,6.4 0 1 1 151.2,162.2" fill="none" stroke="#3A4440" stroke-width="0.8"/>
<text x="139.6" y="158.6" font-size="5.4" font-family="Liberation Sans" fill="#E03030" >2</text>
<text x="145.6" y="158.2" font-size="5.4" font-family="Liberation Sans" fill="#E03030" >1</text>
<text x="147.6" y="164.4" font-size="5.4" font-family="Liberation Sans" fill="#E03030" >3</text>
<path d="M160.8,152.8 A7,7 0 0 1 169.6,149.8" fill="none" stroke="#3A4440" stroke-width="0.8"/>
<path d="M174.6,154.6 A7,7 0 0 1 172.2,162.6" fill="none" stroke="#3A4440" stroke-width="0.8"/>
<text x="159.8" y="158.8" font-size="5.4" font-family="Liberation Sans" fill="#E03030" >1</text>
<text x="170.2" y="153.4" font-size="5.4" font-family="Liberation Sans" fill="#E03030" >3</text>
<text x="168" y="164.6" font-size="5.4" font-family="Liberation Sans" fill="#E03030" >2</text>
<path d="M141.6,182.6 V175.6 Q141.6,171.2 146,171.2 H154" fill="none" stroke="#222" stroke-width="0.9"/>
<circle cx="141.6" cy="180" r="0.6" fill="#E03030"/>
<circle cx="141.6" cy="183" r="0.6" fill="#E03030"/>
<circle cx="150.6" cy="171.2" r="0.6" fill="#E03030"/>
<circle cx="153.6" cy="171.2" r="0.6" fill="#E03030"/>
<circle cx="141.6" cy="176" r="0.6" fill="#E03030"/>
<circle cx="145" cy="171.8" r="0.6" fill="#E03030"/>
<path d="M161.4,181.6 Q163,176 166.6,178 Q169,180 170.4,176.6 Q172.2,172.8 175.4,172.4" fill="none" stroke="#222" stroke-width="0.8"/>
<line x1="170.4" y1="176.6" x2="175.4" y2="176" stroke="#4050D0" stroke-width="0.8" />
<line x1="160.20000000000002" y1="181.6" x2="162.6" y2="181.6" stroke="#E03030" stroke-width="0.7" />
<line x1="161.4" y1="180.4" x2="161.4" y2="182.79999999999998" stroke="#E03030" stroke-width="0.7" />
<line x1="165.4" y1="178" x2="167.79999999999998" y2="178" stroke="#E03030" stroke-width="0.7" />
<line x1="166.6" y1="176.8" x2="166.6" y2="179.2" stroke="#E03030" stroke-width="0.7" />
<line x1="174.20000000000002" y1="172.4" x2="176.6" y2="172.4" stroke="#E03030" stroke-width="0.7" />
<line x1="175.4" y1="171.20000000000002" x2="175.4" y2="173.6" stroke="#E03030" stroke-width="0.7" />
<line x1="141" y1="202.4" x2="155.6" y2="188.6" stroke="#4050D0" stroke-width="0.8" stroke-dasharray="1.2 0.8"/>
<circle cx="143" cy="200.6" r="0.7" fill="#E03030"/>
<circle cx="153.4" cy="190.8" r="0.7" fill="#E03030"/>
<polygon points="154.4,203.4 156,201.4 156,203.4" fill="#222"/>
<path d="M161.2,193 L166.6,189.4 L172.4,189.8 V195.4 L161.2,198 Z" fill="#F0E070" stroke="#222" stroke-width="0.7"/>
<line x1="175.4" y1="192" x2="175.4" y2="201" stroke="#E03030" stroke-width="1" />
<polygon points="173.8,199.4 177,199.4 175.4,202.2" fill="#E03030"/>
<circle cx="163.6" cy="200.8" r="0.6" fill="#E03030"/>
<circle cx="168" cy="201.2" r="0.6" fill="#E03030"/>
<circle cx="172" cy="200.8" r="0.6" fill="#E03030"/>
<polygon points="176.6,203.4 178.2,201.4 178.2,203.4" fill="#222"/>
<polygon points="144.2,217.8 151.8,224.6 148.6,225 151.4,229 149.6,229.8 147,225.8 144.6,228" fill="#000"/>
<line x1="161.6" y1="218.2" x2="161.6" y2="227.4" stroke="#222" stroke-width="1" />
<line x1="173.6" y1="218.2" x2="173.6" y2="229.8" stroke="#222" stroke-width="1" />
<line x1="159.2" y1="223.6" x2="176.4" y2="223.6" stroke="#222" stroke-width="0.8" stroke-dasharray="1.2 0.9"/>
<polygon points="174.6,231.8 176.4,229.8 176.4,231.8" fill="#222"/>
<path d="M141.6,242.8 V249.8 H149 V247.8 H143.6 V242.8 Z" fill="#F0D060" stroke="#444" stroke-width="0.6"/>
<path d="M147.4,236.8 V243.6 H155.4 V241.8 H149.4 V236.8" fill="none" stroke="#333" stroke-width="0.7" stroke-dasharray="1 0.7"/>
<rect x="149.4" y="241.8" width="6" height="1.8" rx="0" fill="#F0E090" />
<line x1="143.6" y1="247.8" x2="147.8" y2="243.4" stroke="#3050D0" stroke-width="0.8" />
<polygon points="153.2,252.6 155,250.6 155,252.6" fill="#222"/>
<path d="M161.4,246.6 H164.4 Q166.6,246.6 167.2,243.2 Q168,239.6 170.6,239.6 Q173.4,239.6 173.6,243.4 V249" fill="none" stroke="#444" stroke-width="0.8"/>
<path d="M161.2,249 H164.8 Q167.6,249 168.6,245 Q169.2,242 170.6,242 Q172,242 172,244.6 V249.2" fill="none" stroke="#E05050" stroke-width="0.8"/>
<rect x="142.4" y="258.2" width="2.1" height="2.1" fill="#000"/>
<rect x="142.4" y="262.09999999999997" width="2.1" height="2.1" fill="#000"/>
<rect x="142.4" y="266.0" width="2.1" height="2.1" fill="#000"/>
<rect x="146.3" y="258.2" width="2.1" height="2.1" fill="#000"/>
<rect x="146.3" y="262.09999999999997" width="2.1" height="2.1" fill="#000"/>
<rect x="146.3" y="266.0" width="2.1" height="2.1" fill="#000"/>
<rect x="150.20000000000002" y="258.2" width="2.1" height="2.1" fill="#000"/>
<rect x="150.20000000000002" y="262.09999999999997" width="2.1" height="2.1" fill="#000"/>
<rect x="150.20000000000002" y="266.0" width="2.1" height="2.1" fill="#000"/>
<rect x="171.9" y="262.0" width="2" height="2" fill="#000"/>
<rect x="170.31837661840737" y="265.81837661840734" width="2" height="2" fill="#000"/>
<rect x="166.5" y="267.4" width="2" height="2" fill="#000"/>
<rect x="162.68162338159263" y="265.81837661840734" width="2" height="2" fill="#000"/>
<rect x="161.1" y="262.0" width="2" height="2" fill="#000"/>
<rect x="162.68162338159263" y="258.18162338159266" width="2" height="2" fill="#000"/>
<rect x="166.5" y="256.6" width="2" height="2" fill="#000"/>
<rect x="170.31837661840734" y="258.18162338159266" width="2" height="2" fill="#000"/>
<path d="M143,286.4 H147 V292 H153.6 V296.6 H143 Z" fill="#FAFAFA" stroke="#222" stroke-width="0.9"/>
<line x1="144.4" y1="287.6" x2="144.4" y2="295.4" stroke="#E03030" stroke-width="0.7" stroke-dasharray="1 0.8"/>
<line x1="148.8" y1="294.6" x2="152.8" y2="294.6" stroke="#E03030" stroke-width="0.7" stroke-dasharray="1 0.8"/>
<path d="M160,291.4 L164.2,284.6 L168.4,291.4" fill="none" stroke="#E05030" stroke-width="0.8"/>
<line x1="160.8" y1="291.4" x2="162.0" y2="288.6" stroke="#E05030" stroke-width="0.6" />
<line x1="162.70000000000002" y1="291.4" x2="163.9" y2="288.6" stroke="#E05030" stroke-width="0.6" />
<line x1="164.60000000000002" y1="291.4" x2="165.8" y2="288.6" stroke="#E05030" stroke-width="0.6" />
<line x1="166.5" y1="291.4" x2="167.7" y2="288.6" stroke="#E05030" stroke-width="0.6" />
<line x1="170.6" y1="290.8" x2="176.4" y2="285" stroke="#E05030" stroke-width="0.8" />
<line x1="159.8" y1="294.4" x2="165.8" y2="294.4" stroke="#E05030" stroke-width="0.9" />
<line x1="159.8" y1="297.4" x2="165.8" y2="297.4" stroke="#E05030" stroke-width="0.9" />
<circle cx="171.2" cy="296" r="2.8" fill="none" stroke="#E05030" stroke-width="0.8"/><circle cx="171.2" cy="296" r="0.8" fill="#E05030"/>
<path d="M142.4,305.2 H146.4 V312.6 H153.8 V317 H142.4 Z" fill="#F4F4F4" stroke="#222" stroke-width="0.9"/>
<line x1="140.2" y1="305.6" x2="140.2" y2="316.6" stroke="#E03030" stroke-width="0.8" />
<line x1="142.6" y1="318.6" x2="153.6" y2="318.6" stroke="#E03030" stroke-width="0.8" />
<line x1="142.6" y1="303.4" x2="146.2" y2="303.4" stroke="#E03030" stroke-width="0.8" stroke-dasharray="1 0.6"/>
<line x1="148" y1="306" x2="148" y2="312" stroke="#E03030" stroke-width="0.7" />
<line x1="164" y1="315.2" x2="172.4" y2="306.4" stroke="#E03030" stroke-width="0.9" />
<line x1="162.4" y1="313.8" x2="165.4" y2="316.6" stroke="#3050D0" stroke-width="0.9" />
<line x1="171" y1="305" x2="173.8" y2="307.8" stroke="#3050D0" stroke-width="0.9" />
<rect x="141.8" y="326.4" width="8.4" height="5.6" rx="0" fill="#F0F0F0" stroke="#222" stroke-width="0.9" />
<line x1="150.4" y1="326.4" x2="153.8" y2="326.4" stroke="#E03030" stroke-width="0.7" stroke-dasharray="0.9 0.7"/>
<line x1="153.8" y1="326.4" x2="153.8" y2="332" stroke="#E03030" stroke-width="0.7" stroke-dasharray="0.9 0.7"/>
<line x1="142.6" y1="335.2" x2="153.6" y2="335.2" stroke="#E03030" stroke-width="0.8" />
<polygon points="141.8,335.2 143.8,333.8 143.8,336.6" fill="#E03030"/><polygon points="154.4,335.2 152.4,333.8 152.4,336.6" fill="#E03030"/>
<text x="159.8" y="334.6" font-size="9.2" font-family="Liberation Sans" fill="#111" font-style="italic" font-weight="bold">f(x)</text>
<path d="M144.4,357 Q148.6,352.6 152.2,356 Q154.6,359.4 151.6,363.6 Q150.4,364.8 149.2,365" fill="none" stroke="#E04A30" stroke-width="0.9"/>
<polygon points="142.6,358.2 146.2,354.2 146.8,358.6" fill="#E04A30"/>
<rect x="159" y="350.2" width="18" height="17.2" rx="1.8" fill="#FBFBF8" stroke="#A9BCD8" stroke-width="1" />
<path d="M162.4,361.2 L171.6,352 L175,355.4 L165.8,364.6 Z" fill="#E8C448" stroke="#3A3010" stroke-width="0.6"/>
<line x1="163.8" y1="362.6" x2="172.8" y2="353.6" stroke="#6A5418" stroke-width="0.7" />
<line x1="164.6" y1="363.6" x2="173.8" y2="354.4" stroke="#6A5418" stroke-width="0.5" />
<path d="M162.4,361.2 L165.8,364.6 L163.6,366.4 L160.6,363.4 Z" fill="#E86060" stroke="#802020" stroke-width="0.4"/>
<path d="M140.9,372.2 H144.20000000000002 V381.4 H149.4 V384.6 H140.9 Z" fill="#FFFFFF" stroke="#222" stroke-width="0.8"/>
<path d="M148.6,378.4 H151.4 L152.0,379 H154.4 V384.6 H148.6 Z" fill="#fff" stroke="#333" stroke-width="0.6"/>
<path d="M148.6,384.6 L150.4,381.4 H156.4 L154.6,384.6 Z" fill="#E6A41E" stroke="#333" stroke-width="0.5"/>
<path d="M160.7,372.2 H164.0 V381.4 H169.2 V384.6 H160.7 Z" fill="#FFFFFF" stroke="#222" stroke-width="0.8"/>
<rect x="169.2" y="377.8" width="7.2" height="7.2" rx="0" fill="#2A7A8C" stroke="#1C3F4A" stroke-width="0.6" />
<rect x="170.6" y="378.2" width="4.4" height="2.8" rx="0" fill="#fff" />
<rect x="171.0" y="382.2" width="3.8" height="2.6" rx="0" fill="#111" />
<rect x="141" y="400.2" width="2.8" height="2.8" rx="0" fill="#D8C860" stroke="#333" stroke-width="0.5" />
<line x1="145" y1="401.6" x2="155.2" y2="401.6" stroke="#9A9ACA" stroke-width="1.4" stroke-dasharray="1.6 1"/>
<rect x="141" y="404.8" width="2.8" height="2.8" rx="0" fill="#D8C860" stroke="#333" stroke-width="0.5" />
<line x1="145" y1="406.20000000000005" x2="155.2" y2="406.20000000000005" stroke="#9A9ACA" stroke-width="1.4" stroke-dasharray="1.6 1"/>
<rect x="141" y="409.4" width="2.8" height="2.8" rx="0" fill="#D8C860" stroke="#333" stroke-width="0.5" />
<line x1="145" y1="410.8" x2="155.2" y2="410.8" stroke="#9A9ACA" stroke-width="1.4" stroke-dasharray="1.6 1"/>
<rect x="160.4" y="399" width="14.4" height="15" rx="0" fill="#FFFFFF" stroke="#3040A8" stroke-width="0.9" />
<line x1="164.0" y1="399" x2="164.0" y2="414" stroke="#3040A8" stroke-width="0.6" />
<line x1="160.4" y1="402.75" x2="174.8" y2="402.75" stroke="#3040A8" stroke-width="0.6" />
<line x1="167.6" y1="399" x2="167.6" y2="414" stroke="#3040A8" stroke-width="0.6" />
<line x1="160.4" y1="406.5" x2="174.8" y2="406.5" stroke="#3040A8" stroke-width="0.6" />
<line x1="171.20000000000002" y1="399" x2="171.20000000000002" y2="414" stroke="#3040A8" stroke-width="0.6" />
<line x1="160.4" y1="410.25" x2="174.8" y2="410.25" stroke="#3040A8" stroke-width="0.6" />
<path d="M167.4,400.4 V408.2 H172.6" fill="none" stroke="#E02020" stroke-width="1.2"/>
<polygon points="165.8,402.2 167.4,399.6 169,402.2" fill="#E02020"/><polygon points="171.6,406.6 174.2,408.2 171.6,409.8" fill="#E02020"/>
<line x1="137" y1="465.6" x2="728" y2="465.6" stroke="#CFCBB9" stroke-width="1" />
<rect x="142.6" y="446.6" width="12" height="14.6" rx="1.6" fill="#F2F1EA" stroke="#C8C6BA" stroke-width="0.8" />
<path d="M151.8,453.8 H146.6 M149.2,450.8 L146,453.8 L149.2,456.8" fill="none" stroke="#ACA899" stroke-width="1.8"/>
<rect x="158" y="446.6" width="12.4" height="14.6" rx="1.6" fill="#F6F6F2" stroke="#5C7AA0" stroke-width="1" />
<line x1="160.6" y1="449.6" x2="167.8" y2="458.4" stroke="#E81818" stroke-width="1.3" />
<line x1="167.8" y1="449.6" x2="160.6" y2="458.4" stroke="#E81818" stroke-width="1.3" />
<text x="174.6" y="456.9" font-size="7.8" font-family="Liberation Sans" fill="#1A1A40"  stroke="#1A1A40" stroke-width="0.1">Select the entities to delete. Scope:</text>
<rect x="302.6" y="446.6" width="62.4" height="14.6" rx="0" fill="#FFFFFF" stroke="#7F9DB9" stroke-width="1" />
<rect x="354.2" y="447.8" width="9.2" height="12.2" rx="1" fill="url(#gDrop)" stroke="#BACBF4" stroke-width="0.6" />
<path d="M356.2,452.6 L358.8,455.2 L361.4,452.6" fill="none" stroke="#4D6185" stroke-width="1.3"/>
<text x="304.8" y="456.9" font-size="7.8" font-family="Liberation Sans" fill="#1A1A40"  stroke="#1A1A40" stroke-width="0.1">Any</text>
<rect x="369.2" y="447.4" width="21" height="13.2" rx="1.6" fill="#F4F3EE" stroke="#2A4F9A" stroke-width="1.1" />
<rect x="370.4" y="448.6" width="18.6" height="10.8" rx="1" fill="none" stroke="#9BB8EC" stroke-width="0.7" />
<text x="370.8" y="456.9" font-size="7.8" font-family="Liberation Sans" fill="#1A1A40"  stroke="#1A1A40" stroke-width="0.1">Done</text>
<rect x="0" y="466" width="728" height="55.5" rx="0" fill="#EDEBE0" />
<rect x="1" y="467.4" width="726" height="52" rx="0" fill="#FBFBF9" />
<line x1="0" y1="519.6" x2="728" y2="519.6" stroke="#C8C4B0" stroke-width="1" />
<line x1="726.2" y1="468" x2="726.2" y2="520" stroke="#D4D0C0" stroke-width="1" />
<rect x="1" y="468.6" width="2.8" height="26.4" rx="1.4" fill="#F4B236" />
<rect x="2.6" y="469.4" width="1.6" height="24.8" rx="0" fill="#F8D088" />
<rect x="3.5" y="496" width="24" height="20.6" rx="1" fill="#F2F1EA" stroke="#B5C6DA" stroke-width="0.8" />
<linearGradient id="gPen" x1="0" y1="0" x2="1" y2="1"><stop offset="0" stop-color="#F4F3EC"/><stop offset="1" stop-color="#C9C6B4"/></linearGradient>
<rect x="8.4" y="474.8" width="12.8" height="13.4" rx="0.6" fill="url(#gPen)" stroke="#8F8D80" stroke-width="0.8" />
<path d="M7.2,486.6 L13.6,480.4 L15.6,482.4 L9.2,488.6 Z" fill="#D8B030" stroke="#6A5010" stroke-width="0.5"/>
<line x1="8.6" y1="485.2" x2="14.6" y2="482" stroke="#8A6A10" stroke-width="0.4" />
<rect x="8.4" y="500.1" width="14.6" height="13.4" rx="0.5" fill="#F0DC70" stroke="#3A3420" stroke-width="1" />
<path d="M10.8,504.6 L12.8,506.8 L10.8,509 M14,504.6 L16,506.8 L14,509 M17.2,504.6 L19.2,506.8 L17.2,509" fill="none" stroke="#111" stroke-width="1.2"/>
<rect x="31.3" y="472.8" width="691" height="42.8" rx="0" fill="#FFFFFF" stroke="#A9BCD6" stroke-width="1" />
<text x="35.6" y="483.8" font-size="9.4" font-family="Liberation Mono" fill="#454545">A new model database has been created.</text>
<text x="35.6" y="492.55" font-size="9.4" font-family="Liberation Mono" fill="#454545">The model &quot;Model-1&quot; has been created.</text>
<text x="35.6" y="501.3" font-size="9.4" font-family="Liberation Mono" fill="#454545">Warning: Select two or more straight entities.</text>
<rect x="0" y="521.3" width="728" height="25" rx="0" fill="url(#gTask)" />
<line x1="0" y1="522" x2="728" y2="522" stroke="#5A93F0" stroke-width="1.2" />
<path d="M0,524.6 H62 Q68.8,524.6 68.8,535.3 Q68.8,546 62,546 H0 Z" fill="url(#gStart)"/>
<path d="M0,525.2 H61 Q66,525.6 67.4,529" fill="none" stroke="#7CC87C" stroke-width="0.8"/>
<path d="M8.6,530 Q10.4,529 13.4,530 L12.8,534.4 Q10,533.6 8,534.4 Z" fill="#F05A28"/>
<path d="M14.2,530.2 Q17,531 20,530 L19.4,534.6 Q16.6,535.4 13.6,534.6 Z" fill="#7DBE3A"/>
<path d="M7.8,535.2 Q10,534.4 12.8,535.2 L12.2,539.6 Q9.6,538.8 7.2,539.6 Z" fill="#3A8CE8"/>
<path d="M13.6,535.4 Q16.4,536.2 19.4,535.4 L18.8,540 Q15.8,540.8 13,540 Z" fill="#FDC42A"/>
<text x="24.6" y="539.8" font-size="12.6" font-family="Liberation Sans" font-style="italic" font-weight="bold" fill="#FFFFFF" textLength="27.4" lengthAdjust="spacingAndGlyphs" style="filter:drop-shadow(0.6px 0.6px 0.4px rgba(0,0,0,0.5))">start</text>
<rect x="75.6" y="529.0" width="1.4" height="1.6" rx="0" fill="#1A3F9A" />
<rect x="77.0" y="531.8" width="1.4" height="1.6" rx="0" fill="#1A3F9A" />
<rect x="75.6" y="534.6" width="1.4" height="1.6" rx="0" fill="#1A3F9A" />
<rect x="77.0" y="537.4" width="1.4" height="1.6" rx="0" fill="#1A3F9A" />
<rect x="75.6" y="540.2" width="1.4" height="1.6" rx="0" fill="#1A3F9A" />
<rect x="588.6" y="529.0" width="1.4" height="1.6" rx="0" fill="#1A3F9A" />
<rect x="590.0" y="531.8" width="1.4" height="1.6" rx="0" fill="#1A3F9A" />
<rect x="588.6" y="534.6" width="1.4" height="1.6" rx="0" fill="#1A3F9A" />
<rect x="590.0" y="537.4" width="1.4" height="1.6" rx="0" fill="#1A3F9A" />
<rect x="588.6" y="540.2" width="1.4" height="1.6" rx="0" fill="#1A3F9A" />
<rect x="83.1" y="527.9" width="82.20000000000002" height="15.6" rx="2" fill="url(#gTaskBtn)" stroke="#2E62D8" stroke-width="0.7" />
<line x1="84.6" y1="528.6" x2="163.8" y2="528.6" stroke="#6AA2FA" stroke-width="0.8" />
<polygon points="158.9,534.6 162.70000000000002,534.6 160.8,536.6" fill="#FFFFFF"/>
<rect x="166.4" y="527.9" width="81.19999999999999" height="15.6" rx="2" fill="url(#gTaskBtn)" stroke="#2E62D8" stroke-width="0.7" />
<line x1="167.9" y1="528.6" x2="246.1" y2="528.6" stroke="#6AA2FA" stroke-width="0.8" />
<rect x="248.8" y="527.9" width="82.59999999999997" height="15.6" rx="2" fill="url(#gTaskBtn)" stroke="#2E62D8" stroke-width="0.7" />
<line x1="250.3" y1="528.6" x2="329.9" y2="528.6" stroke="#6AA2FA" stroke-width="0.8" />
<rect x="332.6" y="527.9" width="82.39999999999998" height="15.6" rx="2" fill="url(#gTaskAct)" stroke="#1E4FC0" stroke-width="0.7" />
<rect x="416.4" y="527.9" width="82.40000000000003" height="15.6" rx="2" fill="url(#gTaskBtn)" stroke="#2E62D8" stroke-width="0.7" />
<line x1="417.9" y1="528.6" x2="497.3" y2="528.6" stroke="#6AA2FA" stroke-width="0.8" />
<polygon points="492.40000000000003,534.6 496.2,534.6 494.3,536.6" fill="#FFFFFF"/>
<rect x="500" y="527.9" width="82.39999999999998" height="15.6" rx="2" fill="url(#gTaskBtn)" stroke="#2E62D8" stroke-width="0.7" />
<line x1="501.5" y1="528.6" x2="580.9" y2="528.6" stroke="#6AA2FA" stroke-width="0.8" />
<polygon points="576.0,534.6 579.8,534.6 577.9,536.6" fill="#FFFFFF"/>
<path d="M89.4,531.4 H93 L94,532.4 H100.2 V539.2 H89.4 Z" fill="#E8C050" stroke="#9A7A20" stroke-width="0.5"/>
<rect x="89.4" y="533.6" width="10.8" height="5.6" rx="0" fill="#F6DA70" />
<text x="103.4" y="537.9" font-size="8.2" font-family="Liberation Sans" fill="#F8C868" textLength="4.6" lengthAdjust="spacingAndGlyphs" >2</text>
<text x="110.3" y="537.9" font-size="8.2" font-family="Liberation Sans" fill="#FFFFFF" textLength="38.9" lengthAdjust="spacingAndGlyphs" >Windows...</text>
<rect x="172.8" y="529.6" width="10.2" height="10.8" rx="1.8" fill="#F4703C" stroke="#FFD0B0" stroke-width="0.6" />
<path d="M180.6,532.2 A3,3 0 1 0 180.6,537.8" fill="none" stroke="#FFFFFF" stroke-width="1.4"/>
<rect x="178.6" y="533.6" width="2.4" height="2.6" rx="0" fill="#E02010" />
<text x="187" y="537.9" font-size="8.2" font-family="Liberation Sans" fill="#FFFFFF" textLength="49.2" lengthAdjust="spacingAndGlyphs" >Microsoft Po...</text>
<rect x="256.2" y="529.6" width="11" height="11" rx="0" fill="#FFFFFF" />
<line x1="258.4" y1="529.8" x2="258.4" y2="540.4" stroke="#1A2A48" stroke-width="1.6" stroke-dasharray="1.6 0.7"/>
<line x1="261.79999999999995" y1="529.8" x2="261.79999999999995" y2="540.4" stroke="#1A2A48" stroke-width="1.6" stroke-dasharray="1.6 0.7"/>
<line x1="265.2" y1="529.8" x2="265.2" y2="540.4" stroke="#1A2A48" stroke-width="1.6" stroke-dasharray="1.6 0.7"/>
<text x="270" y="537.9" font-size="8.2" font-family="Liberation Sans" fill="#FFFFFF" textLength="45" lengthAdjust="spacingAndGlyphs" >ABAQUS CAE</text>
<rect x="341.4" y="530.2" width="9.6" height="10.4" rx="0" fill="#FFFFFF" stroke="#1B2F4A" stroke-width="0.6" />
<polygon points="342,530.8 350.4,530.8 350.4,533 347.6,539.6 346,540 342,534.6" fill="#17639B"/>
<text x="353.8" y="537.9" font-size="8.2" font-family="Liberation Sans" fill="#FFFFFF" textLength="50" lengthAdjust="spacingAndGlyphs" >ABAQUS/CA...</text>
<circle cx="428.8" cy="535.6" r="4.6" fill="#3A8CE0" stroke="#1A5AA0" stroke-width="0.5"/>
<circle cx="428.8" cy="535.6" r="2.2" fill="#D8ECFA"/>
<path d="M423.4,538.8 Q428,528 434,531.4" fill="none" stroke="#F0C040" stroke-width="0.8"/>
<text x="437" y="537.9" font-size="8.2" font-family="Liberation Sans" fill="#F8C868" textLength="4.6" lengthAdjust="spacingAndGlyphs" >2</text>
<text x="444.5" y="537.9" font-size="8.2" font-family="Liberation Sans" fill="#FFFFFF" textLength="38" lengthAdjust="spacingAndGlyphs" >Internet ...</text>
<rect x="507.4" y="530.6" width="10" height="10" rx="0" fill="#F0F0F8" stroke="#3050A0" stroke-width="0.7" />
<text x="509" y="538.6" font-size="6.2" font-family="Liberation Sans" fill="#2A4A9A" font-weight="bold" font-style="italic">W</text>
<text x="521" y="537.9" font-size="8.2" font-family="Liberation Sans" fill="#F8C868" textLength="4.6" lengthAdjust="spacingAndGlyphs" >2</text>
<text x="527.6" y="537.9" font-size="8.2" font-family="Liberation Sans" fill="#FFFFFF" textLength="40" lengthAdjust="spacingAndGlyphs" >Microsoft...</text>
<rect x="596.6" y="530.2" width="11.8" height="11.4" rx="0" fill="#3670DA" />
<text x="598" y="538.2" font-size="8.2" font-family="Liberation Sans" fill="#E8F0FF" textLength="9.2" lengthAdjust="spacingAndGlyphs" >EN</text>
<path d="M614,531 H622.6 V540 H619.8 L618.4,542 L617.6,540 H614 Z" fill="#F8EC70" stroke="#333" stroke-width="0.6"/>
<text x="616.2" y="539" font-size="8" font-family="Liberation Sans" fill="#111" font-weight="bold">?</text>
<rect x="632" y="529.8" width="5" height="3.2" rx="0" fill="none" stroke="#E0ECFF" stroke-width="0.8" />
<rect x="633.4" y="528.6" width="5" height="3.2" rx="0" fill="none" stroke="#E0ECFF" stroke-width="0.8" />
<polygon points="632.6,538 636.4,538 634.5,540" fill="#FFFFFF"/>
<path d="M650,525.2 H728 V546 H650 Z" fill="url(#gTray)"/>
<line x1="650" y1="525.2" x2="650" y2="546" stroke="#1A6AD0" stroke-width="1" />
<circle cx="649.4" cy="535.3" r="6.2" fill="#2E8AF0" stroke="#A8D0FF" stroke-width="0.8"/>
<path d="M650.6,532.2 L647.6,535.3 L650.6,538.4" fill="none" stroke="#FFFFFF" stroke-width="1.6"/>
<path d="M658.2,530.4 Q662.2,530 666.4,530.4 V535 Q666.2,538.6 662.3,540.4 Q658.4,538.6 658.2,535 Z" fill="#D81E1E" stroke="#7A1010" stroke-width="0.5"/>
<line x1="660.6" y1="533.2" x2="664" y2="536.8" stroke="#FFFFFF" stroke-width="1" />
<line x1="664" y1="533.2" x2="660.6" y2="536.8" stroke="#FFFFFF" stroke-width="1" />
<circle cx="675.4" cy="535.3" r="5.6" fill="#60B840"/>
<rect x="672.6" y="532.5" width="5.6" height="5.6" rx="0" fill="#E8D860" stroke="#A0A030" stroke-width="0.6" />
<path d="M683.4,529.8 L692.6,539.4 L691.2,540.8 L682.4,531.2 Z" fill="#505860"/>
<circle cx="691.4" cy="540" r="1.6" fill="#60A8F0"/>
<text x="699.9" y="538.2" font-size="8.4" font-family="Liberation Sans" fill="#FFFFFF" textLength="19.3" lengthAdjust="spacingAndGlyphs" >12:04</text>
</svg>
<svg class="a" style="left:182px;top:79px" width="545" height="362" viewBox="182 79 545 362">
<rect x="182" y="79" width="545" height="362" fill="#000"/>
<line x1="189.30" y1="79" x2="189.30" y2="441" stroke="#106EDA" stroke-width="1.05" stroke-dasharray="1.35 1.5"/>
<line x1="207.42" y1="79" x2="207.42" y2="441" stroke="#106EDA" stroke-width="1.05" stroke-dasharray="1.35 1.5"/>
<line x1="225.54" y1="79" x2="225.54" y2="441" stroke="#106EDA" stroke-width="1.05" stroke-dasharray="1.35 1.5"/>
<line x1="243.66" y1="79" x2="243.66" y2="441" stroke="#106EDA" stroke-width="1.05" stroke-dasharray="1.35 1.5"/>
<line x1="261.78" y1="79" x2="261.78" y2="441" stroke="#106EDA" stroke-width="1.05" stroke-dasharray="1.35 1.5"/>
<line x1="279.90" y1="79" x2="279.90" y2="441" stroke="#106EDA" stroke-width="1.05" stroke-dasharray="1.35 1.5"/>
<line x1="298.03" y1="79" x2="298.03" y2="441" stroke="#106EDA" stroke-width="1.05" stroke-dasharray="1.35 1.5"/>
<line x1="316.15" y1="79" x2="316.15" y2="441" stroke="#106EDA" stroke-width="1.05" stroke-dasharray="1.35 1.5"/>
<line x1="334.27" y1="79" x2="334.27" y2="441" stroke="#106EDA" stroke-width="1.05" stroke-dasharray="1.35 1.5"/>
<line x1="352.39" y1="79" x2="352.39" y2="441" stroke="#106EDA" stroke-width="1.05" stroke-dasharray="1.35 1.5"/>
<line x1="370.51" y1="79" x2="370.51" y2="441" stroke="#106EDA" stroke-width="1.05" stroke-dasharray="1.35 1.5"/>
<line x1="388.63" y1="79" x2="388.63" y2="441" stroke="#106EDA" stroke-width="1.3" stroke-dasharray="3.2 2.8 1.6 3.6" stroke-dashoffset="2.1"/>
<line x1="406.75" y1="79" x2="406.75" y2="441" stroke="#106EDA" stroke-width="1.05" stroke-dasharray="1.35 1.5"/>
<line x1="424.87" y1="79" x2="424.87" y2="441" stroke="#106EDA" stroke-width="1.05" stroke-dasharray="1.35 1.5"/>
<line x1="442.99" y1="79" x2="442.99" y2="441" stroke="#106EDA" stroke-width="1.05" stroke-dasharray="1.35 1.5"/>
<line x1="461.12" y1="79" x2="461.12" y2="441" stroke="#106EDA" stroke-width="1.05" stroke-dasharray="1.35 1.5"/>
<line x1="479.24" y1="79" x2="479.24" y2="441" stroke="#106EDA" stroke-width="1.05" stroke-dasharray="1.35 1.5"/>
<line x1="497.36" y1="79" x2="497.36" y2="441" stroke="#106EDA" stroke-width="1.05" stroke-dasharray="1.35 1.5"/>
<line x1="515.48" y1="79" x2="515.48" y2="441" stroke="#106EDA" stroke-width="1.05" stroke-dasharray="1.35 1.5"/>
<line x1="533.60" y1="79" x2="533.60" y2="441" stroke="#106EDA" stroke-width="1.05" stroke-dasharray="1.35 1.5"/>
<line x1="551.72" y1="79" x2="551.72" y2="441" stroke="#106EDA" stroke-width="1.05" stroke-dasharray="1.35 1.5"/>
<line x1="569.84" y1="79" x2="569.84" y2="441" stroke="#106EDA" stroke-width="1.05" stroke-dasharray="1.35 1.5"/>
<line x1="587.96" y1="79" x2="587.96" y2="441" stroke="#106EDA" stroke-width="1.05" stroke-dasharray="1.35 1.5"/>
<line x1="606.08" y1="79" x2="606.08" y2="441" stroke="#106EDA" stroke-width="1.05" stroke-dasharray="1.35 1.5"/>
<line x1="624.20" y1="79" x2="624.20" y2="441" stroke="#106EDA" stroke-width="1.05" stroke-dasharray="1.35 1.5"/>
<line x1="642.33" y1="79" x2="642.33" y2="441" stroke="#106EDA" stroke-width="1.05" stroke-dasharray="1.35 1.5"/>
<line x1="660.45" y1="79" x2="660.45" y2="441" stroke="#106EDA" stroke-width="1.05" stroke-dasharray="1.35 1.5"/>
<line x1="678.57" y1="79" x2="678.57" y2="441" stroke="#106EDA" stroke-width="1.05" stroke-dasharray="1.35 1.5"/>
<line x1="696.69" y1="79" x2="696.69" y2="441" stroke="#106EDA" stroke-width="1.05" stroke-dasharray="1.35 1.5"/>
<line x1="714.81" y1="79" x2="714.81" y2="441" stroke="#106EDA" stroke-width="1.05" stroke-dasharray="1.35 1.5"/>
<line x1="182" y1="80.60" x2="727" y2="80.60" stroke="#106EDA" stroke-width="1.05" stroke-dasharray="1.35 1.5"/>
<line x1="182" y1="98.32" x2="727" y2="98.32" stroke="#106EDA" stroke-width="1.05" stroke-dasharray="1.35 1.5"/>
<line x1="182" y1="116.04" x2="727" y2="116.04" stroke="#106EDA" stroke-width="1.05" stroke-dasharray="1.35 1.5"/>
<line x1="182" y1="133.77" x2="727" y2="133.77" stroke="#106EDA" stroke-width="1.05" stroke-dasharray="1.35 1.5"/>
<line x1="182" y1="151.49" x2="727" y2="151.49" stroke="#106EDA" stroke-width="1.05" stroke-dasharray="1.35 1.5"/>
<line x1="182" y1="169.22" x2="727" y2="169.22" stroke="#106EDA" stroke-width="1.05" stroke-dasharray="1.35 1.5"/>
<line x1="182" y1="186.94" x2="727" y2="186.94" stroke="#106EDA" stroke-width="1.05" stroke-dasharray="1.35 1.5"/>
<line x1="182" y1="204.66" x2="727" y2="204.66" stroke="#106EDA" stroke-width="1.05" stroke-dasharray="1.35 1.5"/>
<line x1="182" y1="222.39" x2="727" y2="222.39" stroke="#106EDA" stroke-width="1.05" stroke-dasharray="1.35 1.5"/>
<line x1="182" y1="240.11" x2="727" y2="240.11" stroke="#106EDA" stroke-width="1.3" stroke-dasharray="3.1 2.8 1.6 3.7" stroke-dashoffset="8"/>
<line x1="182" y1="257.84" x2="727" y2="257.84" stroke="#106EDA" stroke-width="1.05" stroke-dasharray="1.35 1.5"/>
<line x1="182" y1="275.56" x2="727" y2="275.56" stroke="#106EDA" stroke-width="1.05" stroke-dasharray="1.35 1.5"/>
<line x1="182" y1="293.28" x2="727" y2="293.28" stroke="#106EDA" stroke-width="1.05" stroke-dasharray="1.35 1.5"/>
<line x1="182" y1="311.01" x2="727" y2="311.01" stroke="#106EDA" stroke-width="1.05" stroke-dasharray="1.35 1.5"/>
<line x1="182" y1="328.73" x2="727" y2="328.73" stroke="#106EDA" stroke-width="1.05" stroke-dasharray="1.35 1.5"/>
<line x1="182" y1="346.46" x2="727" y2="346.46" stroke="#106EDA" stroke-width="1.05" stroke-dasharray="1.35 1.5"/>
<line x1="182" y1="364.18" x2="727" y2="364.18" stroke="#106EDA" stroke-width="1.05" stroke-dasharray="1.35 1.5"/>
<line x1="182" y1="381.90" x2="727" y2="381.90" stroke="#106EDA" stroke-width="1.05" stroke-dasharray="1.35 1.5"/>
<line x1="182" y1="399.63" x2="727" y2="399.63" stroke="#106EDA" stroke-width="1.05" stroke-dasharray="1.35 1.5"/>
<line x1="182" y1="417.35" x2="727" y2="417.35" stroke="#106EDA" stroke-width="1.05" stroke-dasharray="1.35 1.5"/>
<line x1="182" y1="435.08" x2="727" y2="435.08" stroke="#106EDA" stroke-width="1.05" stroke-dasharray="1.35 1.5"/>
<polyline points="243.7,293.4 334.1,139.6 515.1,139.6 605.9,293.4 243.7,293.4" fill="none" stroke="#CFC400" stroke-width="1.05"/>
<line x1="334" y1="113.5" x2="334" y2="133.5" stroke="#9A9A9A" stroke-width="1.2"/>
<line x1="515" y1="113.5" x2="515" y2="133.5" stroke="#9A9A9A" stroke-width="1.2"/>
<line x1="334" y1="119.7" x2="515" y2="119.7" stroke="#C8C8C8" stroke-width="1.0"/>
<polygon points="334.5,119.7 343.5,121.6 343.5,117.8" fill="#F0F0F0"/>
<polygon points="514.5,119.7 505.5,117.8 505.5,121.6" fill="#F0F0F0"/>
<line x1="243.7" y1="298.5" x2="243.7" y2="323" stroke="#9A9A9A" stroke-width="1.2"/>
<line x1="605.9" y1="299.5" x2="605.9" y2="323" stroke="#9A9A9A" stroke-width="1.2"/>
<line x1="243.7" y1="317.4" x2="605.9" y2="317.4" stroke="#C8C8C8" stroke-width="1.0"/>
<polygon points="244.2,317.4 253.5,319.3 253.5,315.5" fill="#F0F0F0"/>
<polygon points="605.4,317.4 596.5,315.5 596.5,319.3" fill="#F0F0F0"/>
<line x1="306" y1="124.2" x2="329.1" y2="137.4" stroke="#C8C8C8" stroke-width="1.0"/>
<line x1="215.1" y1="277.1" x2="237.8" y2="290.3" stroke="#C8C8C8" stroke-width="1.0"/>
<line x1="221" y1="280" x2="311.5" y2="127" stroke="#C8C8C8" stroke-width="1.0"/>
<polygon points="311.5,127.0 304.7,134.6 308.1,136.6" fill="#F0F0F0"/>
<polygon points="221.0,280.0 227.8,272.4 224.4,270.4" fill="#F0F0F0"/>
<line x1="521.3" y1="136.3" x2="548.8" y2="120.9" stroke="#C8C8C8" stroke-width="1.0"/>
<line x1="611" y1="290.3" x2="638.1" y2="275.6" stroke="#C8C8C8" stroke-width="1.0"/>
<line x1="543.3" y1="124.4" x2="633" y2="277" stroke="#C8C8C8" stroke-width="1.0"/>
<polygon points="543.3,124.4 546.6,134.0 550.1,132.0" fill="#F0F0F0"/>
<polygon points="633.0,277.0 629.7,267.4 626.2,269.4" fill="#F0F0F0"/>
<line x1="420.1" y1="140.3" x2="427" y2="135.3" stroke="#C8C8C8" stroke-width="1"/>
<line x1="422" y1="145.5" x2="429.3" y2="138.9" stroke="#C8C8C8" stroke-width="1"/>
<line x1="420.3" y1="294.3" x2="425.8" y2="290.4" stroke="#C8C8C8" stroke-width="1"/>
<line x1="422.5" y1="299.2" x2="429.7" y2="292.1" stroke="#C8C8C8" stroke-width="1"/>
<circle cx="334.1" cy="139.6" r="1.1" fill="#E8E8C8"/>
<circle cx="515.1" cy="139.6" r="1.1" fill="#E8E8C8"/>
<circle cx="243.7" cy="293.4" r="1.1" fill="#E8E8C8"/>
<circle cx="605.9" cy="293.4" r="1.1" fill="#E8E8C8"/>
<line x1="230.4" y1="373" x2="230.4" y2="398.5" stroke="#D0D0D0" stroke-width="1.1"/>
<line x1="231" y1="398.5" x2="256.8" y2="398.5" stroke="#D0D0D0" stroke-width="1.1"/>
<text x="227.8" y="370.8" font-size="7.5" font-family="Liberation Sans" fill="#E4E4E4">2</text>
<text x="227.6" y="400.6" font-size="7.5" font-family="Liberation Sans" fill="#E4E4E4">3</text>
<text x="258.6" y="400.2" font-size="7.5" font-family="Liberation Sans" fill="#E4E4E4">1</text>
<text x="420.2" y="113.8" font-size="9.2" font-family="Liberation Sans" fill="#E4E4E4">1.</text>
<text x="419.8" y="332.2" font-size="9.2" font-family="Liberation Sans" fill="#E4E4E4">2.</text>
<text x="252.3" y="206" font-size="9.2" font-family="Liberation Sans" fill="#E4E4E4">1.</text>
<text x="594.2" y="202.8" font-size="9.2" font-family="Liberation Sans" fill="#E4E4E4">1.</text>
<text x="421.2" y="288.9" font-size="6.8" font-family="Liberation Sans" fill="#E4E4E4">H</text>
</svg>
</body></html>
